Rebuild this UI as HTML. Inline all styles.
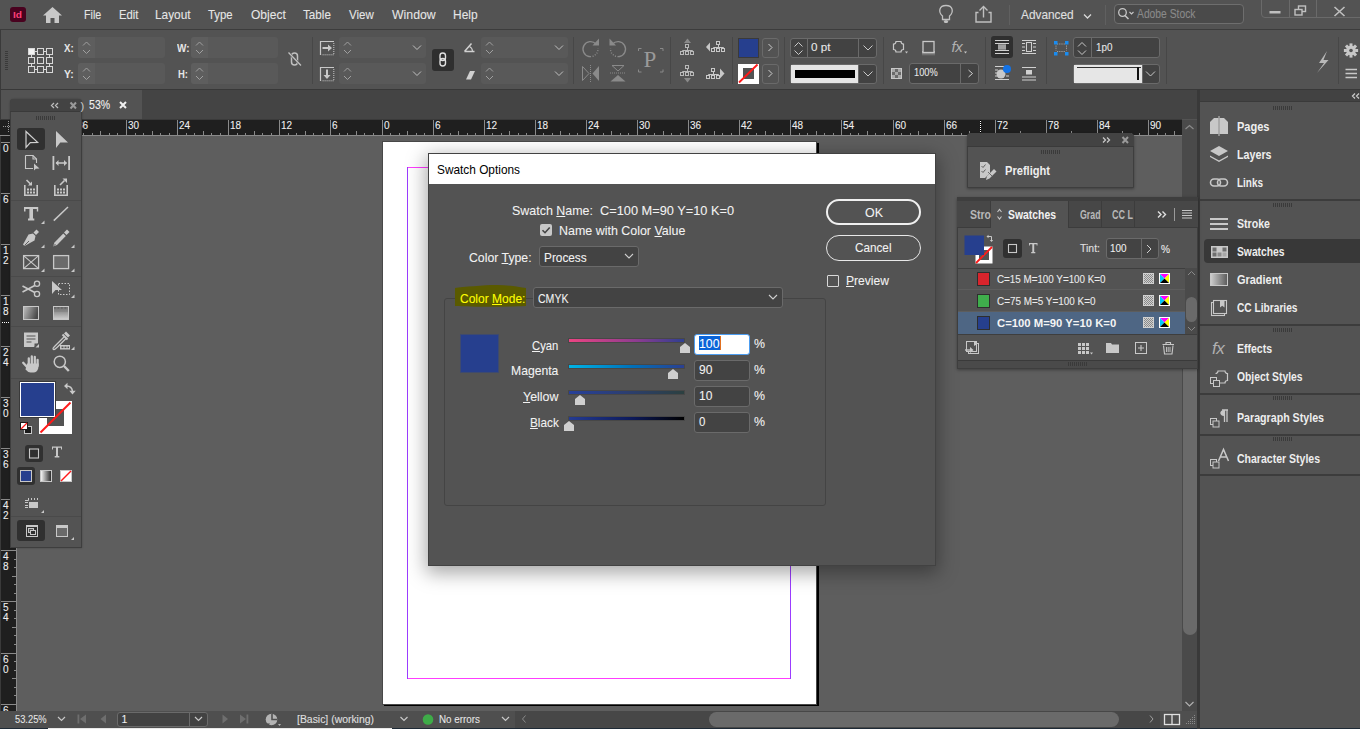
<!DOCTYPE html><html><head><meta charset="utf-8"><style>
html,body{margin:0;padding:0;}
body{width:1360px;height:729px;overflow:hidden;position:relative;background:#535353;font-family:"Liberation Sans",sans-serif;}
div,svg{box-sizing:border-box;}
.tx{-webkit-text-stroke:0.08px currentColor;}
</style></head><body>
<div style="position:absolute;left:0px;top:0px;width:1360px;height:30px;background:#535353;"></div>
<div style="position:absolute;left:0px;top:29px;width:1360px;height:1px;background:#3c3c3c;"></div>
<div style="position:absolute;left:10px;top:7px;width:16px;height:15px;background:#49021f;border-radius:3px;"></div>
<div id="t1" style="position:absolute;left:13px;top:9.96px;font-size:9.5px;line-height:9.5px;color:#ff3f7a;font-weight:bold;white-space:nowrap;font-family:'Liberation Sans', sans-serif;transform:scaleX(1.0647);transform-origin:left top;">Id</div>
<svg style="position:absolute;left:43px;top:7px;" width="19" height="17" viewBox="0 0 19 17"><path d="M9.5 0 L19 8.5 L16 8.5 L16 16 L11.5 16 L11.5 11 L7.5 11 L7.5 16 L3 16 L3 8.5 L0 8.5 Z" fill="#c8c8c8"/></svg>
<div id="t2" class="tx" style="position:absolute;left:83.7px;top:8.00px;font-size:13px;line-height:13px;color:#e6e6e6;font-weight:normal;white-space:nowrap;font-family:'Liberation Sans', sans-serif;transform:scaleX(0.8257);transform-origin:left top;">File</div>
<div id="t3" class="tx" style="position:absolute;left:118.5px;top:8.00px;font-size:13px;line-height:13px;color:#e6e6e6;font-weight:normal;white-space:nowrap;font-family:'Liberation Sans', sans-serif;transform:scaleX(0.8703);transform-origin:left top;">Edit</div>
<div id="t4" class="tx" style="position:absolute;left:155.4px;top:8.00px;font-size:13px;line-height:13px;color:#e6e6e6;font-weight:normal;white-space:nowrap;font-family:'Liberation Sans', sans-serif;transform:scaleX(0.9117);transform-origin:left top;">Layout</div>
<div id="t5" class="tx" style="position:absolute;left:208.3px;top:8.00px;font-size:13px;line-height:13px;color:#e6e6e6;font-weight:normal;white-space:nowrap;font-family:'Liberation Sans', sans-serif;transform:scaleX(0.8763);transform-origin:left top;">Type</div>
<div id="t6" class="tx" style="position:absolute;left:251.2px;top:8.00px;font-size:13px;line-height:13px;color:#e6e6e6;font-weight:normal;white-space:nowrap;font-family:'Liberation Sans', sans-serif;transform:scaleX(0.9261);transform-origin:left top;">Object</div>
<div id="t7" class="tx" style="position:absolute;left:303.3px;top:8.00px;font-size:13px;line-height:13px;color:#e6e6e6;font-weight:normal;white-space:nowrap;font-family:'Liberation Sans', sans-serif;transform:scaleX(0.8977);transform-origin:left top;">Table</div>
<div id="t8" class="tx" style="position:absolute;left:349px;top:8.00px;font-size:13px;line-height:13px;color:#e6e6e6;font-weight:normal;white-space:nowrap;font-family:'Liberation Sans', sans-serif;transform:scaleX(0.8872);transform-origin:left top;">View</div>
<div id="t9" class="tx" style="position:absolute;left:392.2px;top:8.00px;font-size:13px;line-height:13px;color:#e6e6e6;font-weight:normal;white-space:nowrap;font-family:'Liberation Sans', sans-serif;transform:scaleX(0.9449);transform-origin:left top;">Window</div>
<div id="t10" class="tx" style="position:absolute;left:453.4px;top:8.00px;font-size:13px;line-height:13px;color:#e6e6e6;font-weight:normal;white-space:nowrap;font-family:'Liberation Sans', sans-serif;transform:scaleX(0.9196);transform-origin:left top;">Help</div>
<div style="position:absolute;left:0px;top:30px;width:1360px;height:60px;background:#535353;"></div>
<div style="position:absolute;left:0px;top:89px;width:1360px;height:1px;background:#383838;"></div>
<div style="position:absolute;left:0px;top:30px;width:1px;height:60px;background:#3a3a3a;"></div>
<div style="position:absolute;left:0px;top:90px;width:1200px;height:29px;background:#444444;"></div>
<div style="position:absolute;left:1px;top:90px;width:141px;height:29px;background:#535353;"></div>
<div style="position:absolute;left:17px;top:136px;width:1165px;height:575px;background:#5e5e5e;"></div>
<div style="position:absolute;left:0px;top:119px;width:1182px;height:1px;background:#3a3a3a;"></div>
<div style="position:absolute;left:0px;top:120px;width:1182px;height:16px;background:#1f1f1f;"></div>
<div style="position:absolute;left:0px;top:120px;width:16px;height:591px;background:#1f1f1f;"></div>
<div style="position:absolute;left:16px;top:135px;width:1166px;height:1px;background:#8a8a8a;"></div>
<div style="position:absolute;left:16px;top:136px;width:1px;height:575px;background:#8a8a8a;"></div>
<div style="position:absolute;left:0px;top:90px;width:1px;height:621px;background:#3a3a3a;"></div>
<svg style="position:absolute;left:16px;top:120px;" width="1166" height="15" viewBox="0 0 1166 15"><line x1="8.5" y1="0" x2="8.5" y2="15" stroke="#8a8a8a" stroke-width="1"/><line x1="16.5" y1="13" x2="16.5" y2="15" stroke="#8a8a8a" stroke-width="1"/><line x1="25.5" y1="13" x2="25.5" y2="15" stroke="#8a8a8a" stroke-width="1"/><line x1="33.5" y1="11" x2="33.5" y2="15" stroke="#8a8a8a" stroke-width="1"/><line x1="42.5" y1="13" x2="42.5" y2="15" stroke="#8a8a8a" stroke-width="1"/><line x1="50.5" y1="13" x2="50.5" y2="15" stroke="#8a8a8a" stroke-width="1"/><line x1="59.5" y1="0" x2="59.5" y2="15" stroke="#8a8a8a" stroke-width="1"/><line x1="67.5" y1="13" x2="67.5" y2="15" stroke="#8a8a8a" stroke-width="1"/><line x1="76.5" y1="13" x2="76.5" y2="15" stroke="#8a8a8a" stroke-width="1"/><line x1="84.5" y1="11" x2="84.5" y2="15" stroke="#8a8a8a" stroke-width="1"/><line x1="93.5" y1="13" x2="93.5" y2="15" stroke="#8a8a8a" stroke-width="1"/><line x1="101.5" y1="13" x2="101.5" y2="15" stroke="#8a8a8a" stroke-width="1"/><line x1="110.5" y1="0" x2="110.5" y2="15" stroke="#8a8a8a" stroke-width="1"/><line x1="119.5" y1="13" x2="119.5" y2="15" stroke="#8a8a8a" stroke-width="1"/><line x1="127.5" y1="13" x2="127.5" y2="15" stroke="#8a8a8a" stroke-width="1"/><line x1="136.5" y1="11" x2="136.5" y2="15" stroke="#8a8a8a" stroke-width="1"/><line x1="144.5" y1="13" x2="144.5" y2="15" stroke="#8a8a8a" stroke-width="1"/><line x1="153.5" y1="13" x2="153.5" y2="15" stroke="#8a8a8a" stroke-width="1"/><line x1="161.5" y1="0" x2="161.5" y2="15" stroke="#8a8a8a" stroke-width="1"/><line x1="170.5" y1="13" x2="170.5" y2="15" stroke="#8a8a8a" stroke-width="1"/><line x1="178.5" y1="13" x2="178.5" y2="15" stroke="#8a8a8a" stroke-width="1"/><line x1="187.5" y1="11" x2="187.5" y2="15" stroke="#8a8a8a" stroke-width="1"/><line x1="195.5" y1="13" x2="195.5" y2="15" stroke="#8a8a8a" stroke-width="1"/><line x1="204.5" y1="13" x2="204.5" y2="15" stroke="#8a8a8a" stroke-width="1"/><line x1="212.5" y1="0" x2="212.5" y2="15" stroke="#8a8a8a" stroke-width="1"/><line x1="221.5" y1="13" x2="221.5" y2="15" stroke="#8a8a8a" stroke-width="1"/><line x1="229.5" y1="13" x2="229.5" y2="15" stroke="#8a8a8a" stroke-width="1"/><line x1="238.5" y1="11" x2="238.5" y2="15" stroke="#8a8a8a" stroke-width="1"/><line x1="246.5" y1="13" x2="246.5" y2="15" stroke="#8a8a8a" stroke-width="1"/><line x1="255.5" y1="13" x2="255.5" y2="15" stroke="#8a8a8a" stroke-width="1"/><line x1="263.5" y1="0" x2="263.5" y2="15" stroke="#8a8a8a" stroke-width="1"/><line x1="272.5" y1="13" x2="272.5" y2="15" stroke="#8a8a8a" stroke-width="1"/><line x1="280.5" y1="13" x2="280.5" y2="15" stroke="#8a8a8a" stroke-width="1"/><line x1="289.5" y1="11" x2="289.5" y2="15" stroke="#8a8a8a" stroke-width="1"/><line x1="297.5" y1="13" x2="297.5" y2="15" stroke="#8a8a8a" stroke-width="1"/><line x1="306.5" y1="13" x2="306.5" y2="15" stroke="#8a8a8a" stroke-width="1"/><line x1="314.5" y1="0" x2="314.5" y2="15" stroke="#8a8a8a" stroke-width="1"/><line x1="323.5" y1="13" x2="323.5" y2="15" stroke="#8a8a8a" stroke-width="1"/><line x1="331.5" y1="13" x2="331.5" y2="15" stroke="#8a8a8a" stroke-width="1"/><line x1="340.5" y1="11" x2="340.5" y2="15" stroke="#8a8a8a" stroke-width="1"/><line x1="348.5" y1="13" x2="348.5" y2="15" stroke="#8a8a8a" stroke-width="1"/><line x1="357.5" y1="13" x2="357.5" y2="15" stroke="#8a8a8a" stroke-width="1"/><line x1="366.5" y1="0" x2="366.5" y2="15" stroke="#8a8a8a" stroke-width="1"/><line x1="374.5" y1="13" x2="374.5" y2="15" stroke="#8a8a8a" stroke-width="1"/><line x1="383.5" y1="13" x2="383.5" y2="15" stroke="#8a8a8a" stroke-width="1"/><line x1="391.5" y1="11" x2="391.5" y2="15" stroke="#8a8a8a" stroke-width="1"/><line x1="400.5" y1="13" x2="400.5" y2="15" stroke="#8a8a8a" stroke-width="1"/><line x1="408.5" y1="13" x2="408.5" y2="15" stroke="#8a8a8a" stroke-width="1"/><line x1="417.5" y1="0" x2="417.5" y2="15" stroke="#8a8a8a" stroke-width="1"/><line x1="425.5" y1="13" x2="425.5" y2="15" stroke="#8a8a8a" stroke-width="1"/><line x1="434.5" y1="13" x2="434.5" y2="15" stroke="#8a8a8a" stroke-width="1"/><line x1="442.5" y1="11" x2="442.5" y2="15" stroke="#8a8a8a" stroke-width="1"/><line x1="451.5" y1="13" x2="451.5" y2="15" stroke="#8a8a8a" stroke-width="1"/><line x1="459.5" y1="13" x2="459.5" y2="15" stroke="#8a8a8a" stroke-width="1"/><line x1="468.5" y1="0" x2="468.5" y2="15" stroke="#8a8a8a" stroke-width="1"/><line x1="476.5" y1="13" x2="476.5" y2="15" stroke="#8a8a8a" stroke-width="1"/><line x1="485.5" y1="13" x2="485.5" y2="15" stroke="#8a8a8a" stroke-width="1"/><line x1="493.5" y1="11" x2="493.5" y2="15" stroke="#8a8a8a" stroke-width="1"/><line x1="502.5" y1="13" x2="502.5" y2="15" stroke="#8a8a8a" stroke-width="1"/><line x1="510.5" y1="13" x2="510.5" y2="15" stroke="#8a8a8a" stroke-width="1"/><line x1="519.5" y1="0" x2="519.5" y2="15" stroke="#8a8a8a" stroke-width="1"/><line x1="527.5" y1="13" x2="527.5" y2="15" stroke="#8a8a8a" stroke-width="1"/><line x1="536.5" y1="13" x2="536.5" y2="15" stroke="#8a8a8a" stroke-width="1"/><line x1="544.5" y1="11" x2="544.5" y2="15" stroke="#8a8a8a" stroke-width="1"/><line x1="553.5" y1="13" x2="553.5" y2="15" stroke="#8a8a8a" stroke-width="1"/><line x1="561.5" y1="13" x2="561.5" y2="15" stroke="#8a8a8a" stroke-width="1"/><line x1="570.5" y1="0" x2="570.5" y2="15" stroke="#8a8a8a" stroke-width="1"/><line x1="578.5" y1="13" x2="578.5" y2="15" stroke="#8a8a8a" stroke-width="1"/><line x1="587.5" y1="13" x2="587.5" y2="15" stroke="#8a8a8a" stroke-width="1"/><line x1="595.5" y1="11" x2="595.5" y2="15" stroke="#8a8a8a" stroke-width="1"/><line x1="604.5" y1="13" x2="604.5" y2="15" stroke="#8a8a8a" stroke-width="1"/><line x1="612.5" y1="13" x2="612.5" y2="15" stroke="#8a8a8a" stroke-width="1"/><line x1="621.5" y1="0" x2="621.5" y2="15" stroke="#8a8a8a" stroke-width="1"/><line x1="630.5" y1="13" x2="630.5" y2="15" stroke="#8a8a8a" stroke-width="1"/><line x1="638.5" y1="13" x2="638.5" y2="15" stroke="#8a8a8a" stroke-width="1"/><line x1="647.5" y1="11" x2="647.5" y2="15" stroke="#8a8a8a" stroke-width="1"/><line x1="655.5" y1="13" x2="655.5" y2="15" stroke="#8a8a8a" stroke-width="1"/><line x1="664.5" y1="13" x2="664.5" y2="15" stroke="#8a8a8a" stroke-width="1"/><line x1="672.5" y1="0" x2="672.5" y2="15" stroke="#8a8a8a" stroke-width="1"/><line x1="681.5" y1="13" x2="681.5" y2="15" stroke="#8a8a8a" stroke-width="1"/><line x1="689.5" y1="13" x2="689.5" y2="15" stroke="#8a8a8a" stroke-width="1"/><line x1="698.5" y1="11" x2="698.5" y2="15" stroke="#8a8a8a" stroke-width="1"/><line x1="706.5" y1="13" x2="706.5" y2="15" stroke="#8a8a8a" stroke-width="1"/><line x1="715.5" y1="13" x2="715.5" y2="15" stroke="#8a8a8a" stroke-width="1"/><line x1="723.5" y1="0" x2="723.5" y2="15" stroke="#8a8a8a" stroke-width="1"/><line x1="732.5" y1="13" x2="732.5" y2="15" stroke="#8a8a8a" stroke-width="1"/><line x1="740.5" y1="13" x2="740.5" y2="15" stroke="#8a8a8a" stroke-width="1"/><line x1="749.5" y1="11" x2="749.5" y2="15" stroke="#8a8a8a" stroke-width="1"/><line x1="757.5" y1="13" x2="757.5" y2="15" stroke="#8a8a8a" stroke-width="1"/><line x1="766.5" y1="13" x2="766.5" y2="15" stroke="#8a8a8a" stroke-width="1"/><line x1="774.5" y1="0" x2="774.5" y2="15" stroke="#8a8a8a" stroke-width="1"/><line x1="783.5" y1="13" x2="783.5" y2="15" stroke="#8a8a8a" stroke-width="1"/><line x1="791.5" y1="13" x2="791.5" y2="15" stroke="#8a8a8a" stroke-width="1"/><line x1="800.5" y1="11" x2="800.5" y2="15" stroke="#8a8a8a" stroke-width="1"/><line x1="808.5" y1="13" x2="808.5" y2="15" stroke="#8a8a8a" stroke-width="1"/><line x1="817.5" y1="13" x2="817.5" y2="15" stroke="#8a8a8a" stroke-width="1"/><line x1="825.5" y1="0" x2="825.5" y2="15" stroke="#8a8a8a" stroke-width="1"/><line x1="834.5" y1="13" x2="834.5" y2="15" stroke="#8a8a8a" stroke-width="1"/><line x1="842.5" y1="13" x2="842.5" y2="15" stroke="#8a8a8a" stroke-width="1"/><line x1="851.5" y1="11" x2="851.5" y2="15" stroke="#8a8a8a" stroke-width="1"/><line x1="859.5" y1="13" x2="859.5" y2="15" stroke="#8a8a8a" stroke-width="1"/><line x1="868.5" y1="13" x2="868.5" y2="15" stroke="#8a8a8a" stroke-width="1"/><line x1="877.5" y1="0" x2="877.5" y2="15" stroke="#8a8a8a" stroke-width="1"/><line x1="885.5" y1="13" x2="885.5" y2="15" stroke="#8a8a8a" stroke-width="1"/><line x1="894.5" y1="13" x2="894.5" y2="15" stroke="#8a8a8a" stroke-width="1"/><line x1="902.5" y1="11" x2="902.5" y2="15" stroke="#8a8a8a" stroke-width="1"/><line x1="911.5" y1="13" x2="911.5" y2="15" stroke="#8a8a8a" stroke-width="1"/><line x1="919.5" y1="13" x2="919.5" y2="15" stroke="#8a8a8a" stroke-width="1"/><line x1="928.5" y1="0" x2="928.5" y2="15" stroke="#8a8a8a" stroke-width="1"/><line x1="936.5" y1="13" x2="936.5" y2="15" stroke="#8a8a8a" stroke-width="1"/><line x1="945.5" y1="13" x2="945.5" y2="15" stroke="#8a8a8a" stroke-width="1"/><line x1="953.5" y1="11" x2="953.5" y2="15" stroke="#8a8a8a" stroke-width="1"/><line x1="962.5" y1="13" x2="962.5" y2="15" stroke="#8a8a8a" stroke-width="1"/><line x1="970.5" y1="13" x2="970.5" y2="15" stroke="#8a8a8a" stroke-width="1"/><line x1="979.5" y1="0" x2="979.5" y2="15" stroke="#8a8a8a" stroke-width="1"/><line x1="987.5" y1="13" x2="987.5" y2="15" stroke="#8a8a8a" stroke-width="1"/><line x1="996.5" y1="13" x2="996.5" y2="15" stroke="#8a8a8a" stroke-width="1"/><line x1="1004.5" y1="11" x2="1004.5" y2="15" stroke="#8a8a8a" stroke-width="1"/><line x1="1013.5" y1="13" x2="1013.5" y2="15" stroke="#8a8a8a" stroke-width="1"/><line x1="1021.5" y1="13" x2="1021.5" y2="15" stroke="#8a8a8a" stroke-width="1"/><line x1="1030.5" y1="0" x2="1030.5" y2="15" stroke="#8a8a8a" stroke-width="1"/><line x1="1038.5" y1="13" x2="1038.5" y2="15" stroke="#8a8a8a" stroke-width="1"/><line x1="1047.5" y1="13" x2="1047.5" y2="15" stroke="#8a8a8a" stroke-width="1"/><line x1="1055.5" y1="11" x2="1055.5" y2="15" stroke="#8a8a8a" stroke-width="1"/><line x1="1064.5" y1="13" x2="1064.5" y2="15" stroke="#8a8a8a" stroke-width="1"/><line x1="1072.5" y1="13" x2="1072.5" y2="15" stroke="#8a8a8a" stroke-width="1"/><line x1="1081.5" y1="0" x2="1081.5" y2="15" stroke="#8a8a8a" stroke-width="1"/><line x1="1089.5" y1="13" x2="1089.5" y2="15" stroke="#8a8a8a" stroke-width="1"/><line x1="1098.5" y1="13" x2="1098.5" y2="15" stroke="#8a8a8a" stroke-width="1"/><line x1="1106.5" y1="11" x2="1106.5" y2="15" stroke="#8a8a8a" stroke-width="1"/><line x1="1115.5" y1="13" x2="1115.5" y2="15" stroke="#8a8a8a" stroke-width="1"/><line x1="1123.5" y1="13" x2="1123.5" y2="15" stroke="#8a8a8a" stroke-width="1"/><line x1="1132.5" y1="0" x2="1132.5" y2="15" stroke="#8a8a8a" stroke-width="1"/><line x1="1141.5" y1="13" x2="1141.5" y2="15" stroke="#8a8a8a" stroke-width="1"/><line x1="1149.5" y1="13" x2="1149.5" y2="15" stroke="#8a8a8a" stroke-width="1"/><line x1="1158.5" y1="11" x2="1158.5" y2="15" stroke="#8a8a8a" stroke-width="1"/><line x1="1166.5" y1="13" x2="1166.5" y2="15" stroke="#8a8a8a" stroke-width="1"/></svg>
<div id="t11" class="tx" style="position:absolute;left:26px;top:120.53px;font-size:10px;line-height:10px;color:#f0f0f0;font-weight:normal;white-space:nowrap;font-family:'Liberation Sans', sans-serif;transform:scaleX(1.0000);transform-origin:left top;">42</div>
<div id="t12" class="tx" style="position:absolute;left:77px;top:120.53px;font-size:10px;line-height:10px;color:#f0f0f0;font-weight:normal;white-space:nowrap;font-family:'Liberation Sans', sans-serif;transform:scaleX(1.0000);transform-origin:left top;">36</div>
<div id="t13" class="tx" style="position:absolute;left:128px;top:120.53px;font-size:10px;line-height:10px;color:#f0f0f0;font-weight:normal;white-space:nowrap;font-family:'Liberation Sans', sans-serif;transform:scaleX(1.0000);transform-origin:left top;">30</div>
<div id="t14" class="tx" style="position:absolute;left:179px;top:120.53px;font-size:10px;line-height:10px;color:#f0f0f0;font-weight:normal;white-space:nowrap;font-family:'Liberation Sans', sans-serif;transform:scaleX(1.0000);transform-origin:left top;">24</div>
<div id="t15" class="tx" style="position:absolute;left:230px;top:120.53px;font-size:10px;line-height:10px;color:#f0f0f0;font-weight:normal;white-space:nowrap;font-family:'Liberation Sans', sans-serif;transform:scaleX(1.0000);transform-origin:left top;">18</div>
<div id="t16" class="tx" style="position:absolute;left:281px;top:120.53px;font-size:10px;line-height:10px;color:#f0f0f0;font-weight:normal;white-space:nowrap;font-family:'Liberation Sans', sans-serif;transform:scaleX(1.0000);transform-origin:left top;">12</div>
<div id="t17" class="tx" style="position:absolute;left:332px;top:120.53px;font-size:10px;line-height:10px;color:#f0f0f0;font-weight:normal;white-space:nowrap;font-family:'Liberation Sans', sans-serif;transform:scaleX(1.0000);transform-origin:left top;">6</div>
<div id="t18" class="tx" style="position:absolute;left:384px;top:120.53px;font-size:10px;line-height:10px;color:#f0f0f0;font-weight:normal;white-space:nowrap;font-family:'Liberation Sans', sans-serif;transform:scaleX(1.0000);transform-origin:left top;">0</div>
<div id="t19" class="tx" style="position:absolute;left:435px;top:120.53px;font-size:10px;line-height:10px;color:#f0f0f0;font-weight:normal;white-space:nowrap;font-family:'Liberation Sans', sans-serif;transform:scaleX(1.0000);transform-origin:left top;">6</div>
<div id="t20" class="tx" style="position:absolute;left:486px;top:120.53px;font-size:10px;line-height:10px;color:#f0f0f0;font-weight:normal;white-space:nowrap;font-family:'Liberation Sans', sans-serif;transform:scaleX(1.0000);transform-origin:left top;">12</div>
<div id="t21" class="tx" style="position:absolute;left:537px;top:120.53px;font-size:10px;line-height:10px;color:#f0f0f0;font-weight:normal;white-space:nowrap;font-family:'Liberation Sans', sans-serif;transform:scaleX(1.0000);transform-origin:left top;">18</div>
<div id="t22" class="tx" style="position:absolute;left:588px;top:120.53px;font-size:10px;line-height:10px;color:#f0f0f0;font-weight:normal;white-space:nowrap;font-family:'Liberation Sans', sans-serif;transform:scaleX(1.0000);transform-origin:left top;">24</div>
<div id="t23" class="tx" style="position:absolute;left:639px;top:120.53px;font-size:10px;line-height:10px;color:#f0f0f0;font-weight:normal;white-space:nowrap;font-family:'Liberation Sans', sans-serif;transform:scaleX(1.0000);transform-origin:left top;">30</div>
<div id="t24" class="tx" style="position:absolute;left:690px;top:120.53px;font-size:10px;line-height:10px;color:#f0f0f0;font-weight:normal;white-space:nowrap;font-family:'Liberation Sans', sans-serif;transform:scaleX(1.0000);transform-origin:left top;">36</div>
<div id="t25" class="tx" style="position:absolute;left:741px;top:120.53px;font-size:10px;line-height:10px;color:#f0f0f0;font-weight:normal;white-space:nowrap;font-family:'Liberation Sans', sans-serif;transform:scaleX(1.0000);transform-origin:left top;">42</div>
<div id="t26" class="tx" style="position:absolute;left:792px;top:120.53px;font-size:10px;line-height:10px;color:#f0f0f0;font-weight:normal;white-space:nowrap;font-family:'Liberation Sans', sans-serif;transform:scaleX(1.0000);transform-origin:left top;">48</div>
<div id="t27" class="tx" style="position:absolute;left:843px;top:120.53px;font-size:10px;line-height:10px;color:#f0f0f0;font-weight:normal;white-space:nowrap;font-family:'Liberation Sans', sans-serif;transform:scaleX(1.0000);transform-origin:left top;">54</div>
<div id="t28" class="tx" style="position:absolute;left:895px;top:120.53px;font-size:10px;line-height:10px;color:#f0f0f0;font-weight:normal;white-space:nowrap;font-family:'Liberation Sans', sans-serif;transform:scaleX(1.0000);transform-origin:left top;">60</div>
<div id="t29" class="tx" style="position:absolute;left:946px;top:120.53px;font-size:10px;line-height:10px;color:#f0f0f0;font-weight:normal;white-space:nowrap;font-family:'Liberation Sans', sans-serif;transform:scaleX(1.0000);transform-origin:left top;">66</div>
<div id="t30" class="tx" style="position:absolute;left:997px;top:120.53px;font-size:10px;line-height:10px;color:#f0f0f0;font-weight:normal;white-space:nowrap;font-family:'Liberation Sans', sans-serif;transform:scaleX(1.0000);transform-origin:left top;">72</div>
<div id="t31" class="tx" style="position:absolute;left:1048px;top:120.53px;font-size:10px;line-height:10px;color:#f0f0f0;font-weight:normal;white-space:nowrap;font-family:'Liberation Sans', sans-serif;transform:scaleX(1.0000);transform-origin:left top;">78</div>
<div id="t32" class="tx" style="position:absolute;left:1099px;top:120.53px;font-size:10px;line-height:10px;color:#f0f0f0;font-weight:normal;white-space:nowrap;font-family:'Liberation Sans', sans-serif;transform:scaleX(1.0000);transform-origin:left top;">84</div>
<div id="t33" class="tx" style="position:absolute;left:1150px;top:120.53px;font-size:10px;line-height:10px;color:#f0f0f0;font-weight:normal;white-space:nowrap;font-family:'Liberation Sans', sans-serif;transform:scaleX(1.0000);transform-origin:left top;">90</div>
<svg style="position:absolute;left:0px;top:136px;" width="17" height="575" viewBox="0 0 17 575"><line x1="1" y1="6.5" x2="16" y2="6.5" stroke="#8a8a8a" stroke-width="1"/><line x1="14" y1="14.5" x2="16" y2="14.5" stroke="#8a8a8a" stroke-width="1"/><line x1="14" y1="23.5" x2="16" y2="23.5" stroke="#8a8a8a" stroke-width="1"/><line x1="12" y1="31.5" x2="16" y2="31.5" stroke="#8a8a8a" stroke-width="1"/><line x1="14" y1="40.5" x2="16" y2="40.5" stroke="#8a8a8a" stroke-width="1"/><line x1="14" y1="48.5" x2="16" y2="48.5" stroke="#8a8a8a" stroke-width="1"/><line x1="1" y1="57.5" x2="16" y2="57.5" stroke="#8a8a8a" stroke-width="1"/><line x1="14" y1="65.5" x2="16" y2="65.5" stroke="#8a8a8a" stroke-width="1"/><line x1="14" y1="74.5" x2="16" y2="74.5" stroke="#8a8a8a" stroke-width="1"/><line x1="12" y1="82.5" x2="16" y2="82.5" stroke="#8a8a8a" stroke-width="1"/><line x1="14" y1="91.5" x2="16" y2="91.5" stroke="#8a8a8a" stroke-width="1"/><line x1="14" y1="99.5" x2="16" y2="99.5" stroke="#8a8a8a" stroke-width="1"/><line x1="1" y1="108.5" x2="16" y2="108.5" stroke="#8a8a8a" stroke-width="1"/><line x1="14" y1="116.5" x2="16" y2="116.5" stroke="#8a8a8a" stroke-width="1"/><line x1="14" y1="125.5" x2="16" y2="125.5" stroke="#8a8a8a" stroke-width="1"/><line x1="12" y1="133.5" x2="16" y2="133.5" stroke="#8a8a8a" stroke-width="1"/><line x1="14" y1="142.5" x2="16" y2="142.5" stroke="#8a8a8a" stroke-width="1"/><line x1="14" y1="150.5" x2="16" y2="150.5" stroke="#8a8a8a" stroke-width="1"/><line x1="1" y1="159.5" x2="16" y2="159.5" stroke="#8a8a8a" stroke-width="1"/><line x1="14" y1="167.5" x2="16" y2="167.5" stroke="#8a8a8a" stroke-width="1"/><line x1="14" y1="176.5" x2="16" y2="176.5" stroke="#8a8a8a" stroke-width="1"/><line x1="12" y1="184.5" x2="16" y2="184.5" stroke="#8a8a8a" stroke-width="1"/><line x1="14" y1="193.5" x2="16" y2="193.5" stroke="#8a8a8a" stroke-width="1"/><line x1="14" y1="201.5" x2="16" y2="201.5" stroke="#8a8a8a" stroke-width="1"/><line x1="1" y1="210.5" x2="16" y2="210.5" stroke="#8a8a8a" stroke-width="1"/><line x1="14" y1="218.5" x2="16" y2="218.5" stroke="#8a8a8a" stroke-width="1"/><line x1="14" y1="227.5" x2="16" y2="227.5" stroke="#8a8a8a" stroke-width="1"/><line x1="12" y1="235.5" x2="16" y2="235.5" stroke="#8a8a8a" stroke-width="1"/><line x1="14" y1="244.5" x2="16" y2="244.5" stroke="#8a8a8a" stroke-width="1"/><line x1="14" y1="252.5" x2="16" y2="252.5" stroke="#8a8a8a" stroke-width="1"/><line x1="1" y1="261.5" x2="16" y2="261.5" stroke="#8a8a8a" stroke-width="1"/><line x1="14" y1="270.5" x2="16" y2="270.5" stroke="#8a8a8a" stroke-width="1"/><line x1="14" y1="278.5" x2="16" y2="278.5" stroke="#8a8a8a" stroke-width="1"/><line x1="12" y1="287.5" x2="16" y2="287.5" stroke="#8a8a8a" stroke-width="1"/><line x1="14" y1="295.5" x2="16" y2="295.5" stroke="#8a8a8a" stroke-width="1"/><line x1="14" y1="304.5" x2="16" y2="304.5" stroke="#8a8a8a" stroke-width="1"/><line x1="1" y1="312.5" x2="16" y2="312.5" stroke="#8a8a8a" stroke-width="1"/><line x1="14" y1="321.5" x2="16" y2="321.5" stroke="#8a8a8a" stroke-width="1"/><line x1="14" y1="329.5" x2="16" y2="329.5" stroke="#8a8a8a" stroke-width="1"/><line x1="12" y1="338.5" x2="16" y2="338.5" stroke="#8a8a8a" stroke-width="1"/><line x1="14" y1="346.5" x2="16" y2="346.5" stroke="#8a8a8a" stroke-width="1"/><line x1="14" y1="355.5" x2="16" y2="355.5" stroke="#8a8a8a" stroke-width="1"/><line x1="1" y1="363.5" x2="16" y2="363.5" stroke="#8a8a8a" stroke-width="1"/><line x1="14" y1="372.5" x2="16" y2="372.5" stroke="#8a8a8a" stroke-width="1"/><line x1="14" y1="380.5" x2="16" y2="380.5" stroke="#8a8a8a" stroke-width="1"/><line x1="12" y1="389.5" x2="16" y2="389.5" stroke="#8a8a8a" stroke-width="1"/><line x1="14" y1="397.5" x2="16" y2="397.5" stroke="#8a8a8a" stroke-width="1"/><line x1="14" y1="406.5" x2="16" y2="406.5" stroke="#8a8a8a" stroke-width="1"/><line x1="1" y1="414.5" x2="16" y2="414.5" stroke="#8a8a8a" stroke-width="1"/><line x1="14" y1="423.5" x2="16" y2="423.5" stroke="#8a8a8a" stroke-width="1"/><line x1="14" y1="431.5" x2="16" y2="431.5" stroke="#8a8a8a" stroke-width="1"/><line x1="12" y1="440.5" x2="16" y2="440.5" stroke="#8a8a8a" stroke-width="1"/><line x1="14" y1="448.5" x2="16" y2="448.5" stroke="#8a8a8a" stroke-width="1"/><line x1="14" y1="457.5" x2="16" y2="457.5" stroke="#8a8a8a" stroke-width="1"/><line x1="1" y1="465.5" x2="16" y2="465.5" stroke="#8a8a8a" stroke-width="1"/><line x1="14" y1="474.5" x2="16" y2="474.5" stroke="#8a8a8a" stroke-width="1"/><line x1="14" y1="482.5" x2="16" y2="482.5" stroke="#8a8a8a" stroke-width="1"/><line x1="12" y1="491.5" x2="16" y2="491.5" stroke="#8a8a8a" stroke-width="1"/><line x1="14" y1="499.5" x2="16" y2="499.5" stroke="#8a8a8a" stroke-width="1"/><line x1="14" y1="508.5" x2="16" y2="508.5" stroke="#8a8a8a" stroke-width="1"/><line x1="1" y1="517.5" x2="16" y2="517.5" stroke="#8a8a8a" stroke-width="1"/><line x1="14" y1="525.5" x2="16" y2="525.5" stroke="#8a8a8a" stroke-width="1"/><line x1="14" y1="534.5" x2="16" y2="534.5" stroke="#8a8a8a" stroke-width="1"/><line x1="12" y1="542.5" x2="16" y2="542.5" stroke="#8a8a8a" stroke-width="1"/><line x1="14" y1="551.5" x2="16" y2="551.5" stroke="#8a8a8a" stroke-width="1"/><line x1="14" y1="559.5" x2="16" y2="559.5" stroke="#8a8a8a" stroke-width="1"/><line x1="1" y1="568.5" x2="16" y2="568.5" stroke="#8a8a8a" stroke-width="1"/></svg>
<div id="t34" class="tx" style="position:absolute;left:3px;top:144.03px;font-size:10px;line-height:10px;color:#f0f0f0;font-weight:normal;white-space:nowrap;font-family:'Liberation Sans', sans-serif;transform:scaleX(1.0000);transform-origin:left top;">0</div>
<div id="t35" class="tx" style="position:absolute;left:3px;top:195.03px;font-size:10px;line-height:10px;color:#f0f0f0;font-weight:normal;white-space:nowrap;font-family:'Liberation Sans', sans-serif;transform:scaleX(1.0000);transform-origin:left top;">6</div>
<div id="t36" class="tx" style="position:absolute;left:3px;top:246.03px;font-size:10px;line-height:10px;color:#f0f0f0;font-weight:normal;white-space:nowrap;font-family:'Liberation Sans', sans-serif;transform:scaleX(1.0000);transform-origin:left top;">1</div>
<div id="t37" class="tx" style="position:absolute;left:3px;top:255.64px;font-size:10px;line-height:10px;color:#f0f0f0;font-weight:normal;white-space:nowrap;font-family:'Liberation Sans', sans-serif;transform:scaleX(1.0000);transform-origin:left top;">2</div>
<div id="t38" class="tx" style="position:absolute;left:3px;top:297.04px;font-size:10px;line-height:10px;color:#f0f0f0;font-weight:normal;white-space:nowrap;font-family:'Liberation Sans', sans-serif;transform:scaleX(1.0000);transform-origin:left top;">1</div>
<div id="t39" class="tx" style="position:absolute;left:3px;top:306.64px;font-size:10px;line-height:10px;color:#f0f0f0;font-weight:normal;white-space:nowrap;font-family:'Liberation Sans', sans-serif;transform:scaleX(1.0000);transform-origin:left top;">8</div>
<div id="t40" class="tx" style="position:absolute;left:3px;top:348.04px;font-size:10px;line-height:10px;color:#f0f0f0;font-weight:normal;white-space:nowrap;font-family:'Liberation Sans', sans-serif;transform:scaleX(1.0000);transform-origin:left top;">2</div>
<div id="t41" class="tx" style="position:absolute;left:3px;top:357.64px;font-size:10px;line-height:10px;color:#f0f0f0;font-weight:normal;white-space:nowrap;font-family:'Liberation Sans', sans-serif;transform:scaleX(1.0000);transform-origin:left top;">4</div>
<div id="t42" class="tx" style="position:absolute;left:3px;top:399.04px;font-size:10px;line-height:10px;color:#f0f0f0;font-weight:normal;white-space:nowrap;font-family:'Liberation Sans', sans-serif;transform:scaleX(1.0000);transform-origin:left top;">3</div>
<div id="t43" class="tx" style="position:absolute;left:3px;top:408.64px;font-size:10px;line-height:10px;color:#f0f0f0;font-weight:normal;white-space:nowrap;font-family:'Liberation Sans', sans-serif;transform:scaleX(1.0000);transform-origin:left top;">0</div>
<div id="t44" class="tx" style="position:absolute;left:3px;top:450.04px;font-size:10px;line-height:10px;color:#f0f0f0;font-weight:normal;white-space:nowrap;font-family:'Liberation Sans', sans-serif;transform:scaleX(1.0000);transform-origin:left top;">3</div>
<div id="t45" class="tx" style="position:absolute;left:3px;top:459.64px;font-size:10px;line-height:10px;color:#f0f0f0;font-weight:normal;white-space:nowrap;font-family:'Liberation Sans', sans-serif;transform:scaleX(1.0000);transform-origin:left top;">6</div>
<div id="t46" class="tx" style="position:absolute;left:3px;top:501.04px;font-size:10px;line-height:10px;color:#f0f0f0;font-weight:normal;white-space:nowrap;font-family:'Liberation Sans', sans-serif;transform:scaleX(1.0000);transform-origin:left top;">4</div>
<div id="t47" class="tx" style="position:absolute;left:3px;top:510.64px;font-size:10px;line-height:10px;color:#f0f0f0;font-weight:normal;white-space:nowrap;font-family:'Liberation Sans', sans-serif;transform:scaleX(1.0000);transform-origin:left top;">2</div>
<div id="t48" class="tx" style="position:absolute;left:3px;top:552.03px;font-size:10px;line-height:10px;color:#f0f0f0;font-weight:normal;white-space:nowrap;font-family:'Liberation Sans', sans-serif;transform:scaleX(1.0000);transform-origin:left top;">4</div>
<div id="t49" class="tx" style="position:absolute;left:3px;top:561.63px;font-size:10px;line-height:10px;color:#f0f0f0;font-weight:normal;white-space:nowrap;font-family:'Liberation Sans', sans-serif;transform:scaleX(1.0000);transform-origin:left top;">8</div>
<div id="t50" class="tx" style="position:absolute;left:3px;top:603.03px;font-size:10px;line-height:10px;color:#f0f0f0;font-weight:normal;white-space:nowrap;font-family:'Liberation Sans', sans-serif;transform:scaleX(1.0000);transform-origin:left top;">5</div>
<div id="t51" class="tx" style="position:absolute;left:3px;top:612.63px;font-size:10px;line-height:10px;color:#f0f0f0;font-weight:normal;white-space:nowrap;font-family:'Liberation Sans', sans-serif;transform:scaleX(1.0000);transform-origin:left top;">4</div>
<div id="t52" class="tx" style="position:absolute;left:3px;top:655.03px;font-size:10px;line-height:10px;color:#f0f0f0;font-weight:normal;white-space:nowrap;font-family:'Liberation Sans', sans-serif;transform:scaleX(1.0000);transform-origin:left top;">6</div>
<div id="t53" class="tx" style="position:absolute;left:3px;top:664.63px;font-size:10px;line-height:10px;color:#f0f0f0;font-weight:normal;white-space:nowrap;font-family:'Liberation Sans', sans-serif;transform:scaleX(1.0000);transform-origin:left top;">0</div>
<div id="t54" class="tx" style="position:absolute;left:3px;top:706.03px;font-size:10px;line-height:10px;color:#f0f0f0;font-weight:normal;white-space:nowrap;font-family:'Liberation Sans', sans-serif;transform:scaleX(1.0000);transform-origin:left top;">6</div>
<div id="t55" class="tx" style="position:absolute;left:3px;top:715.63px;font-size:10px;line-height:10px;color:#f0f0f0;font-weight:normal;white-space:nowrap;font-family:'Liberation Sans', sans-serif;transform:scaleX(1.0000);transform-origin:left top;">6</div>
<div style="position:absolute;left:0px;top:120px;width:16px;height:16px;background:#1f1f1f;"></div>
<svg style="position:absolute;left:3px;top:121px;" width="11" height="12" viewBox="0 0 11 12"><g stroke="#9a9a9a" stroke-width="1" stroke-dasharray="1 1"><line x1="5.5" y1="0" x2="5.5" y2="12"/><line x1="0" y1="5.5" x2="11" y2="5.5"/></g></svg>
<div style="position:absolute;left:0px;top:135px;width:17px;height:1px;background:#8a8a8a;"></div>
<div style="position:absolute;left:384px;top:143px;width:435px;height:563px;background:#000;"></div>
<div style="position:absolute;left:382px;top:141px;width:435px;height:564px;background:#484848;"></div>
<div style="position:absolute;left:383px;top:142px;width:433px;height:562px;background:#fff;"></div>
<div style="position:absolute;left:407px;top:167px;width:384px;height:1px;background:#ff3cff;"></div>
<div style="position:absolute;left:407px;top:678px;width:384px;height:1px;background:#ff3cff;"></div>
<div style="position:absolute;left:407px;top:167px;width:1px;height:512px;background:#9b3cff;"></div>
<div style="position:absolute;left:790px;top:167px;width:1px;height:512px;background:#9b3cff;"></div>
<div style="position:absolute;left:0px;top:711px;width:1200px;height:17px;background:#4f4f4f;"></div>
<div style="position:absolute;left:0px;top:728px;width:1360px;height:1px;background:#1e2a36;"></div>
<div style="position:absolute;left:48px;top:728px;width:344px;height:1px;background:#e8e8e8;"></div>
<svg style="position:absolute;left:980px;top:120px;" width="1" height="13" viewBox="0 0 1 13"><rect x="0" y="1" width="1" height="1" fill="#ffffff"/><rect x="0" y="3" width="1" height="1" fill="#ffffff"/><rect x="0" y="5" width="1" height="1" fill="#ffffff"/><rect x="0" y="7" width="1" height="1" fill="#ffffff"/><rect x="0" y="9" width="1" height="1" fill="#ffffff"/><rect x="0" y="11" width="1" height="1" fill="#ffffff"/><rect x="0" y="0" width="1" height="1" fill="#000"/><rect x="0" y="2" width="1" height="1" fill="#000"/><rect x="0" y="4" width="1" height="1" fill="#000"/><rect x="0" y="6" width="1" height="1" fill="#000"/><rect x="0" y="8" width="1" height="1" fill="#000"/><rect x="0" y="10" width="1" height="1" fill="#000"/><rect x="0" y="12" width="1" height="1" fill="#000"/></svg>
<svg style="position:absolute;left:1px;top:322px;" width="9" height="1" viewBox="0 0 9 1"><rect x="1" y="0" width="1" height="1" fill="#ffffff"/><rect x="3" y="0" width="1" height="1" fill="#ffffff"/><rect x="5" y="0" width="1" height="1" fill="#ffffff"/><rect x="7" y="0" width="1" height="1" fill="#ffffff"/></svg>
<div style="position:absolute;left:428px;top:153px;width:508px;height:413px;background:#535353;border:1px solid #424242;box-shadow:0 5px 18px 2px rgba(0,0,0,0.35);"></div>
<div style="position:absolute;left:429px;top:154px;width:506px;height:30px;background:#ffffff;"></div>
<div id="t56" style="position:absolute;left:437px;top:162.50px;font-size:13px;line-height:13px;color:#000000;font-weight:normal;white-space:nowrap;font-family:'Liberation Sans', sans-serif;transform:scaleX(0.9116);transform-origin:left top;">Swatch Options</div>
<div id="t57" class="tx" style="position:absolute;left:511.8px;top:203.80px;font-size:13px;line-height:13px;color:#f2f2f2;font-weight:normal;white-space:nowrap;font-family:'Liberation Sans', sans-serif;transform:scaleX(0.9580);transform-origin:left top;">Swatch <u>N</u>ame:</div>
<div id="t58" class="tx" style="position:absolute;left:599.7px;top:203.80px;font-size:13px;line-height:13px;color:#f2f2f2;font-weight:normal;white-space:nowrap;font-family:'Liberation Sans', sans-serif;transform:scaleX(0.9826);transform-origin:left top;">C=100 M=90 Y=10 K=0</div>
<div style="position:absolute;left:540px;top:224px;width:12px;height:12px;background:#c8c8c8;border-radius:2px;"></div>
<svg style="position:absolute;left:540px;top:224px;" width="12" height="12" viewBox="0 0 12 12"><path d="M2.5 6.2 L5 8.7 L9.7 3.5" stroke="#444" stroke-width="1.6" fill="none"/></svg>
<div id="t59" class="tx" style="position:absolute;left:559px;top:224.00px;font-size:13px;line-height:13px;color:#f2f2f2;font-weight:normal;white-space:nowrap;font-family:'Liberation Sans', sans-serif;transform:scaleX(0.9576);transform-origin:left top;">Name with Color <u>V</u>alue</div>
<div id="t60" class="tx" style="position:absolute;left:469.4px;top:251.20px;font-size:13px;line-height:13px;color:#f2f2f2;font-weight:normal;white-space:nowrap;font-family:'Liberation Sans', sans-serif;transform:scaleX(0.9447);transform-origin:left top;">Color <u>T</u>ype:</div>
<div style="position:absolute;left:539px;top:246px;width:100px;height:21px;background:#434343;border:1px solid #6a6a6a;border-radius:3px;"></div>
<div id="t61" class="tx" style="position:absolute;left:544px;top:251.00px;font-size:13px;line-height:13px;color:#f2f2f2;font-weight:normal;white-space:nowrap;font-family:'Liberation Sans', sans-serif;transform:scaleX(0.9091);transform-origin:left top;">Process</div>
<svg style="position:absolute;left:624px;top:252px;" width="10" height="8" viewBox="0 0 10 8"><path d="M1 2 L5 6 L9 2" stroke="#d0d0d0" stroke-width="1.1" fill="none"/></svg>
<div style="position:absolute;left:444px;top:298px;width:382px;height:208px;border:1px solid #444444;border-radius:3px;"></div>
<svg style="position:absolute;left:453px;top:284px;" width="76" height="24" viewBox="0 0 76 24"><path d="M2 4 C10 3, 30 1, 44 1 C56 1, 66 3, 73 4 L73 22 C55 23, 20 23, 2 22 Z" fill="#5a5a00"/></svg>
<div id="t62" class="tx" style="position:absolute;left:459.6px;top:291.90px;font-size:13px;line-height:13px;color:#ffff00;font-weight:normal;white-space:nowrap;font-family:'Liberation Sans', sans-serif;transform:scaleX(0.9232);transform-origin:left top;">Color <u>M</u>ode:</div>
<div style="position:absolute;left:533px;top:287px;width:250px;height:21px;background:#434343;border:1px solid #6a6a6a;border-radius:3px;"></div>
<div id="t63" class="tx" style="position:absolute;left:538.2px;top:291.90px;font-size:13px;line-height:13px;color:#f2f2f2;font-weight:normal;white-space:nowrap;font-family:'Liberation Sans', sans-serif;transform:scaleX(0.8120);transform-origin:left top;">CMYK</div>
<svg style="position:absolute;left:768px;top:293px;" width="10" height="8" viewBox="0 0 10 8"><path d="M1 2 L5 6 L9 2" stroke="#d0d0d0" stroke-width="1.1" fill="none"/></svg>
<div style="position:absolute;left:460px;top:334px;width:39px;height:39px;background:#263f8e;border:1px solid #3e4a6e;"></div>
<div id="t64" class="tx" style="position:absolute;left:532.2px;top:338.60px;font-size:13px;line-height:13px;color:#f2f2f2;font-weight:normal;white-space:nowrap;font-family:'Liberation Sans', sans-serif;transform:scaleX(0.8663);transform-origin:left top;"><u>C</u>yan</div>
<div id="t65" class="tx" style="position:absolute;left:511.1px;top:364.20px;font-size:13px;line-height:13px;color:#f2f2f2;font-weight:normal;white-space:nowrap;font-family:'Liberation Sans', sans-serif;transform:scaleX(0.9366);transform-origin:left top;">Ma<u>g</u>enta</div>
<div id="t66" class="tx" style="position:absolute;left:523.1px;top:390.00px;font-size:13px;line-height:13px;color:#f2f2f2;font-weight:normal;white-space:nowrap;font-family:'Liberation Sans', sans-serif;transform:scaleX(0.9539);transform-origin:left top;"><u>Y</u>ellow</div>
<div id="t67" class="tx" style="position:absolute;left:529.7px;top:416.20px;font-size:13px;line-height:13px;color:#f2f2f2;font-weight:normal;white-space:nowrap;font-family:'Liberation Sans', sans-serif;transform:scaleX(0.9057);transform-origin:left top;"><u>B</u>lack</div>
<div style="position:absolute;left:568px;top:337.5px;width:117px;height:5px;background:linear-gradient(90deg,#ec4482,#8a3c90 60%,#2e3f90);border:1px solid #474747;"></div>
<svg style="position:absolute;left:680px;top:343px;" width="10" height="10" viewBox="0 0 10 10"><path d="M5 0 L10 4 L10 10 L0 10 L0 4 Z" fill="#cfcfcf"/></svg>
<div style="position:absolute;left:694px;top:333.5px;width:56px;height:21px;background:#ffffff;border:1.5px solid #4d9df0;border-radius:3px;"></div>
<div style="position:absolute;left:698.5px;top:336px;width:21.5px;height:14px;background:#0a64d8;"></div>
<div id="t68" class="tx" style="position:absolute;left:699px;top:336.60px;font-size:13px;line-height:13px;color:#ffffff;font-weight:normal;white-space:nowrap;font-family:'Liberation Sans', sans-serif;transform:scaleX(0.9446);transform-origin:left top;">100</div>
<div style="position:absolute;left:720px;top:336px;width:1px;height:14px;background:#e07020;"></div>
<div id="t69" class="tx" style="position:absolute;left:754px;top:337.00px;font-size:13px;line-height:13px;color:#f2f2f2;font-weight:normal;white-space:nowrap;font-family:'Liberation Sans', sans-serif;transform:scaleX(0.9514);transform-origin:left top;">%</div>
<div style="position:absolute;left:568px;top:363.5px;width:117px;height:5px;background:linear-gradient(90deg,#00b4e6,#0070b8 55%,#2b3f90);border:1px solid #474747;"></div>
<svg style="position:absolute;left:668px;top:369px;" width="10" height="10" viewBox="0 0 10 10"><path d="M5 0 L10 4 L10 10 L0 10 L0 4 Z" fill="#cfcfcf"/></svg>
<div style="position:absolute;left:694px;top:359.5px;width:56px;height:21px;background:#434343;border:1px solid #6a6a6a;border-radius:3px;"></div>
<div id="t70" class="tx" style="position:absolute;left:699px;top:362.60px;font-size:13px;line-height:13px;color:#f2f2f2;font-weight:normal;white-space:nowrap;font-family:'Liberation Sans', sans-serif;transform:scaleX(0.9261);transform-origin:left top;">90</div>
<div id="t71" class="tx" style="position:absolute;left:754px;top:363.00px;font-size:13px;line-height:13px;color:#f2f2f2;font-weight:normal;white-space:nowrap;font-family:'Liberation Sans', sans-serif;transform:scaleX(0.9514);transform-origin:left top;">%</div>
<div style="position:absolute;left:568px;top:389.5px;width:117px;height:5px;background:linear-gradient(90deg,#27409a,#2c3e70 50%,#2c4040);border:1px solid #474747;"></div>
<svg style="position:absolute;left:574.5px;top:395px;" width="10" height="10" viewBox="0 0 10 10"><path d="M5 0 L10 4 L10 10 L0 10 L0 4 Z" fill="#cfcfcf"/></svg>
<div style="position:absolute;left:694px;top:385.5px;width:56px;height:21px;background:#434343;border:1px solid #6a6a6a;border-radius:3px;"></div>
<div id="t72" class="tx" style="position:absolute;left:699px;top:388.60px;font-size:13px;line-height:13px;color:#f2f2f2;font-weight:normal;white-space:nowrap;font-family:'Liberation Sans', sans-serif;transform:scaleX(0.9261);transform-origin:left top;">10</div>
<div id="t73" class="tx" style="position:absolute;left:754px;top:389.00px;font-size:13px;line-height:13px;color:#f2f2f2;font-weight:normal;white-space:nowrap;font-family:'Liberation Sans', sans-serif;transform:scaleX(0.9514);transform-origin:left top;">%</div>
<div style="position:absolute;left:568px;top:415.5px;width:117px;height:5px;background:linear-gradient(90deg,#243b92,#0d1a5a 55%,#000000);border:1px solid #474747;"></div>
<svg style="position:absolute;left:564px;top:421px;" width="10" height="10" viewBox="0 0 10 10"><path d="M5 0 L10 4 L10 10 L0 10 L0 4 Z" fill="#cfcfcf"/></svg>
<div style="position:absolute;left:694px;top:411.5px;width:56px;height:21px;background:#434343;border:1px solid #6a6a6a;border-radius:3px;"></div>
<div id="t74" class="tx" style="position:absolute;left:699px;top:414.60px;font-size:13px;line-height:13px;color:#f2f2f2;font-weight:normal;white-space:nowrap;font-family:'Liberation Sans', sans-serif;transform:scaleX(0.8847);transform-origin:left top;">0</div>
<div id="t75" class="tx" style="position:absolute;left:754px;top:415.00px;font-size:13px;line-height:13px;color:#f2f2f2;font-weight:normal;white-space:nowrap;font-family:'Liberation Sans', sans-serif;transform:scaleX(0.9514);transform-origin:left top;">%</div>
<div style="position:absolute;left:826px;top:199px;width:95px;height:26px;border:2px solid #f0f0f0;border-radius:13px;"></div>
<div id="t76" class="tx" style="position:absolute;left:864.5px;top:205.60px;font-size:13px;line-height:13px;color:#f2f2f2;font-weight:normal;white-space:nowrap;font-family:'Liberation Sans', sans-serif;transform:scaleX(0.9576);transform-origin:left top;">OK</div>
<div style="position:absolute;left:826px;top:235px;width:95px;height:26px;border:1px solid #e8e8e8;border-radius:13px;"></div>
<div id="t77" class="tx" style="position:absolute;left:855.3px;top:241.40px;font-size:13px;line-height:13px;color:#f2f2f2;font-weight:normal;white-space:nowrap;font-family:'Liberation Sans', sans-serif;transform:scaleX(0.9019);transform-origin:left top;">Cancel</div>
<div style="position:absolute;left:827px;top:275px;width:12px;height:12px;border:1px solid #d8d8d8;border-radius:1px;"></div>
<div id="t78" class="tx" style="position:absolute;left:846px;top:274.30px;font-size:13px;line-height:13px;color:#f2f2f2;font-weight:normal;white-space:nowrap;font-family:'Liberation Sans', sans-serif;transform:scaleX(0.9297);transform-origin:left top;"><u>P</u>review</div>
<div style="position:absolute;left:10px;top:99px;width:72px;height:449px;background:#535353;border:1px solid #3e3e3e;border-top:none;border-radius:4px 4px 0 0;box-shadow:0 0 2px rgba(0,0,0,0.3);"></div>
<div style="position:absolute;left:10px;top:99px;width:72px;height:13px;background:#434343;border-radius:4px 4px 0 0;border-bottom:1px solid #3a3a3a;"></div>
<div style="position:absolute;left:17px;top:128px;width:28px;height:22px;background:#303030;border-radius:3px;"></div>
<div style="position:absolute;left:11px;top:200px;width:70px;height:1px;background:#4a4a4a;"></div>
<div style="position:absolute;left:11px;top:276px;width:70px;height:1px;background:#4a4a4a;"></div>
<div style="position:absolute;left:11px;top:326px;width:70px;height:1px;background:#4a4a4a;"></div>
<div style="position:absolute;left:11px;top:378px;width:70px;height:1px;background:#4a4a4a;"></div>
<div style="position:absolute;left:11px;top:516px;width:70px;height:1px;background:#4a4a4a;"></div>
<svg style="position:absolute;left:0px;top:0px;pointer-events:none;" width="1360" height="729" viewBox="0 0 1360 729"><path d="M54 103 L51.5 105.5 L54 108 M58 103 L55.5 105.5 L58 108" stroke="#bdbdbd" stroke-width="1.3" fill="none"/><path d="M70.5 102.5 L76 108.5 M76 102.5 L70.5 108.5" stroke="#9a9a9a" stroke-width="2"/><rect x="36" y="116" width="1" height="4" fill="#3a3a3a"/><rect x="38" y="116" width="1" height="4" fill="#3a3a3a"/><rect x="40" y="116" width="1" height="4" fill="#3a3a3a"/><rect x="42" y="116" width="1" height="4" fill="#3a3a3a"/><rect x="44" y="116" width="1" height="4" fill="#3a3a3a"/><rect x="46" y="116" width="1" height="4" fill="#3a3a3a"/><rect x="48" y="116" width="1" height="4" fill="#3a3a3a"/><rect x="50" y="116" width="1" height="4" fill="#3a3a3a"/><rect x="52" y="116" width="1" height="4" fill="#3a3a3a"/><rect x="54" y="116" width="1" height="4" fill="#3a3a3a"/><path d="M26 131.5 L26 147.5 L30.3 142.6 L37.6 142.4 Z" stroke="#d0d0d0" stroke-width="1.2" fill="none" stroke-linejoin="miter"/><path d="M56 131 L56 148 L60.3 142.6 L68 142.4 Z" fill="#c8c8c8"/><path d="M25.5 155.5 L33 155.5 L36.5 159 L36.5 163 M36.5 163 M25.5 155.5 L25.5 168.5 L33 168.5" stroke="#c8c8c8" stroke-width="1.1" fill="none"/><path d="M33 155.5 L33 159 L36.5 159" stroke="#c8c8c8" stroke-width="1.1" fill="none"/><path d="M34 163.5 L34 170.5 L35.8 168.8 L39.5 168.5 Z" fill="#c8c8c8"/><rect x="52.5" y="156" width="1.8" height="14" fill="#c8c8c8"/><rect x="68.2" y="156" width="1.8" height="14" fill="#c8c8c8"/><path d="M56 163 L66.5 163" stroke="#c8c8c8" stroke-width="1.5"/><path d="M55.5 163 L58.5 160 L58.5 166 Z M67 163 L64 160 L64 166 Z" fill="#c8c8c8"/><path d="M24.8 185 L24.8 195.2 L37.2 195.2 L37.2 185" stroke="#c8c8c8" stroke-width="1.6" fill="none"/><rect x="27" y="188.5" width="2" height="2" fill="#c8c8c8"/><rect x="30" y="188.5" width="2" height="2" fill="#c8c8c8"/><rect x="33" y="188.5" width="2" height="2" fill="#c8c8c8"/><rect x="27" y="191.5" width="2" height="2" fill="#c8c8c8"/><rect x="30" y="191.5" width="2" height="2" fill="#c8c8c8"/><rect x="33" y="191.5" width="2" height="2" fill="#c8c8c8"/><path d="M26.5 180 L30.5 184" stroke="#c8c8c8" stroke-width="1.6"/><path d="M32 185.5 L32 181.5 L28 185.5 Z" fill="#c8c8c8"/><path d="M54.8 185 L54.8 195.2 L67.2 195.2 L67.2 185" stroke="#c8c8c8" stroke-width="1.6" fill="none"/><rect x="57" y="188.5" width="2" height="2" fill="#c8c8c8"/><rect x="60" y="188.5" width="2" height="2" fill="#c8c8c8"/><rect x="63" y="188.5" width="2" height="2" fill="#c8c8c8"/><rect x="57" y="191.5" width="2" height="2" fill="#c8c8c8"/><rect x="60" y="191.5" width="2" height="2" fill="#c8c8c8"/><rect x="63" y="191.5" width="2" height="2" fill="#c8c8c8"/><path d="M60 185 L64.5 180.5" stroke="#c8c8c8" stroke-width="1.6"/><path d="M67 178.5 L67 183 L62.5 178.5 Z" fill="#c8c8c8"/><path d="M24 207 L38.2 207 L38.2 211.5 L36.8 211.5 L36.8 209 L33 209 L33 218.5 L34.3 218.5 L34.3 220.5 L28 220.5 L28 218.5 L29.4 218.5 L29.4 209 L25.5 209 L25.5 211.5 L24 211.5 Z" fill="#c8c8c8"/><path d="M53.8 220.6 L68 207" stroke="#c8c8c8" stroke-width="1.5"/><path d="M33.5 232.5 L36.5 229.5 L39 232 L36 235 Z" fill="#c8c8c8"/><path d="M33 233.5 L35.5 236 L34.5 240.5 L24.5 246 L23 244.5 L28.5 234.5 Z" fill="#c8c8c8"/><path d="M24.5 245.5 L29 241" stroke="#535353" stroke-width="0.9"/><path d="M64 232.5 L67 229.5 L69.5 232 L66.5 235 Z" fill="#c8c8c8"/><path d="M63.3 233.5 L65.8 236 L57 245 L53 246.5 L54.5 242.5 Z" fill="#c8c8c8"/><path d="M53 246.5 L55.5 244" stroke="#535353" stroke-width="0.9"/><rect x="23.6" y="255.6" width="15" height="13" stroke="#c8c8c8" stroke-width="1.3" fill="none"/><path d="M23.6 255.6 L38.6 268.6 M38.6 255.6 L23.6 268.6" stroke="#c8c8c8" stroke-width="1.1"/><rect x="53.6" y="255.6" width="15" height="13" stroke="#c8c8c8" stroke-width="1.3" fill="#6a6a6a"/><path d="M41 224 L44.5 224 L44.5 220.5 Z" fill="#c8c8c8"/><path d="M41 248 L44.5 248 L44.5 244.5 Z" fill="#c8c8c8"/><path d="M71 248 L74.5 248 L74.5 244.5 Z" fill="#c8c8c8"/><path d="M41 272 L44.5 272 L44.5 268.5 Z" fill="#c8c8c8"/><path d="M71 272 L74.5 272 L74.5 268.5 Z" fill="#c8c8c8"/><path d="M71 298 L74.5 298 L74.5 294.5 Z" fill="#c8c8c8"/><path d="M71 350 L74.5 350 L74.5 346.5 Z" fill="#c8c8c8"/><circle cx="37" cy="283.8" r="2.6" stroke="#c8c8c8" stroke-width="1.3" fill="none"/><circle cx="37" cy="294" r="2.6" stroke="#c8c8c8" stroke-width="1.3" fill="none"/><path d="M22.5 286 L34.8 292.5 M22.5 292 L34.8 285.5" stroke="#c8c8c8" stroke-width="1.6"/><rect x="58.5" y="283.5" width="11" height="11" stroke="#c8c8c8" stroke-width="1" stroke-dasharray="1.5 1.5" fill="none"/><path d="M52 281 L52 294 L55.5 290 L62 290 Z" fill="#c8c8c8"/><defs><linearGradient id="gs" x1="0" x2="1" y1="0" y2="0.3"><stop offset="0" stop-color="#c0c0c0"/><stop offset="1" stop-color="#4a4a4a"/></linearGradient><linearGradient id="gf" x1="0" x2="0" y1="0" y2="1"><stop offset="0" stop-color="#6a6a6a"/><stop offset="1" stop-color="#d0d0d0"/></linearGradient></defs><rect x="23.5" y="306.5" width="15" height="13" stroke="#c8c8c8" stroke-width="1" fill="url(#gs)"/><rect x="53.5" y="306.5" width="15" height="13" stroke="#c8c8c8" stroke-width="1" fill="url(#gf)"/><rect x="54.0" y="307" width="1.75" height="1.75" fill="#555"/><rect x="57.5" y="307" width="1.75" height="1.75" fill="#555"/><rect x="61.0" y="307" width="1.75" height="1.75" fill="#555"/><rect x="64.5" y="307" width="1.75" height="1.75" fill="#555"/><rect x="54" y="307" width="14" height="5" fill="#777" opacity="0.4"/><path d="M24 332.5 L38 332.5 L38 343 L34 347 L24 347 Z" fill="#c8c8c8"/><path d="M26.5 336 L35.5 336 M26.5 339 L35.5 339 M26.5 342 L31.5 342" stroke="#535353" stroke-width="1.2"/><path d="M34.5 347 L38 343.5 L34.5 343.5 Z" fill="#535353"/><path d="M35.5 347.5 L39 344 L39 347.5 Z" fill="#c8c8c8"/><path d="M66 331.5 L70 335.5 L68 337.5 L64 333.5 Z" fill="#c8c8c8"/><path d="M62.5 334.5 L67.5 339.5" stroke="#c8c8c8" stroke-width="2"/><path d="M64 337 L55 346 C53 348,52.5 349,53.5 349.5 C54.5 350,55.5 349,57.5 347 L66 338.5" stroke="#c8c8c8" stroke-width="1.3" fill="none"/><rect x="60" y="345" width="10" height="4.5" fill="#c8c8c8"/><rect x="61.5" y="346.5" width="2" height="1.6" fill="#535353"/><rect x="64.5" y="346.5" width="2" height="1.6" fill="#535353"/><rect x="67.5" y="346.5" width="1.5" height="1.6" fill="#535353"/><path d="M28.8 358.5 L28.8 365 M31.8 356.5 L31.8 365 M34.8 357 L34.8 365 M37.6 360 L37.6 366 M23.2 362.8 L27.5 367.5" stroke="#c8c8c8" stroke-width="2.3" stroke-linecap="round"/><path d="M27 363.5 L38.7 363.5 L38.2 368.5 Q37 372.5 33.5 372.5 L30.5 372.5 Q27.5 372 25.5 369.5 Z" fill="#c8c8c8"/><circle cx="59.8" cy="361.8" r="5.6" stroke="#c8c8c8" stroke-width="1.5" fill="none"/><path d="M64 366 L68.8 371" stroke="#c8c8c8" stroke-width="2.4"/></svg>
<div style="position:absolute;left:39px;top:401px;width:33px;height:33px;background:#ffffff;"></div>
<div style="position:absolute;left:47px;top:409px;width:17px;height:17px;background:#535353;"></div>
<div style="position:absolute;left:20px;top:382px;width:35px;height:35px;background:#ffffff;box-shadow:0 0 0 1px #3a3a3a;"></div>
<div style="position:absolute;left:21px;top:383px;width:33px;height:33px;background:#263f8e;"></div>
<div style="position:absolute;left:25px;top:445px;width:18px;height:17px;background:#303030;border-radius:3px;"></div>
<div style="position:absolute;left:17px;top:467px;width:18px;height:18px;background:#303030;border-radius:3px;"></div>
<div style="position:absolute;left:17px;top:520px;width:28px;height:21px;background:#303030;border-radius:3px;"></div>
<svg style="position:absolute;left:0px;top:0px;pointer-events:none;" width="1360" height="729" viewBox="0 0 1360 729"><path d="M40.5 432.5 L70.5 402.5" stroke="#ff1a1a" stroke-width="2"/><path d="M66.5 386 Q72 386 72.5 391.5" stroke="#c8c8c8" stroke-width="1.5" fill="none"/><path d="M64 386 L67.5 382.8 L67.5 389.2 Z M72.5 394.5 L69.3 390.8 L75.7 390.8 Z" fill="#c8c8c8"/><rect x="24.5" y="426.5" width="7" height="7" fill="#1a1a1a" stroke="#c8c8c8" stroke-width="1"/><rect x="20.5" y="422.5" width="7" height="7" fill="#ffffff" stroke="#1a1a1a" stroke-width="1"/><path d="M21 429 L27 423" stroke="#ff1a1a" stroke-width="1.2"/><rect x="29.5" y="449" width="9" height="9" stroke="#c8c8c8" stroke-width="1.1" fill="none"/><path d="M52 446.5 L62 446.5 L62 449.5 L61 449.5 L61 447.8 L58 447.8 L58 456 L59.3 456 L59.3 457.5 L54.7 457.5 L54.7 456 L56 456 L56 447.8 L53 447.8 L53 449.5 L52 449.5 Z" fill="#c8c8c8"/><rect x="20.5" y="470.5" width="11" height="11" fill="#263f8e" stroke="#c8c8c8" stroke-width="1"/><defs><linearGradient id="ga" x1="0" x2="1"><stop offset="0" stop-color="#ffffff"/><stop offset="1" stop-color="#222"/></linearGradient></defs><rect x="40.5" y="470.5" width="11" height="11" fill="url(#ga)" stroke="#c8c8c8" stroke-width="1"/><rect x="60.5" y="470.5" width="11" height="11" fill="#ffffff" stroke="#c8c8c8" stroke-width="1"/><path d="M61 481 L71 471" stroke="#ff1a1a" stroke-width="1.4"/><rect x="29" y="502" width="9" height="6" fill="#c8c8c8"/><path d="M31.5 498 L31.5 500 M34.5 498 L34.5 500 M37.5 498 L37.5 500 M25 502.5 L28 502.5 M25 505.5 L28 505.5 M25 507.5 L28 507.5 M25 500.5 L28.5 500.5 L28.5 498" stroke="#c8c8c8" stroke-width="1" fill="none"/><path d="M41 513 L44 513 L44 510 Z" fill="#c8c8c8"/><rect x="26.5" y="525.5" width="11" height="11" stroke="#c8c8c8" stroke-width="1" fill="none"/><rect x="26.5" y="525.5" width="11" height="1.5" fill="#c8c8c8"/><rect x="28.5" y="528.5" width="5" height="4" stroke="#c8c8c8" stroke-width="1" fill="#535353"/><rect x="30.5" y="530.5" width="5" height="4" stroke="#c8c8c8" stroke-width="1" fill="#303030"/><rect x="56.5" y="525.5" width="11" height="11" stroke="#c8c8c8" stroke-width="1" fill="#6a6a6a"/><rect x="56.5" y="525.5" width="11" height="2.5" fill="#c8c8c8"/><path d="M71 540 L74 540 L74 537 Z" fill="#c8c8c8"/></svg>
<div id="t79" style="position:absolute;left:63.5px;top:43.11px;font-size:10.5px;line-height:10.5px;color:#e6e6e6;font-weight:bold;white-space:nowrap;font-family:'Liberation Sans', sans-serif;transform:scaleX(0.9238);transform-origin:left top;">X:</div>
<div id="t80" style="position:absolute;left:63.5px;top:69.11px;font-size:10.5px;line-height:10.5px;color:#e6e6e6;font-weight:bold;white-space:nowrap;font-family:'Liberation Sans', sans-serif;transform:scaleX(0.9965);transform-origin:left top;">Y:</div>
<div id="t81" style="position:absolute;left:176.5px;top:43.11px;font-size:10.5px;line-height:10.5px;color:#e6e6e6;font-weight:bold;white-space:nowrap;font-family:'Liberation Sans', sans-serif;transform:scaleX(0.9456);transform-origin:left top;">W:</div>
<div id="t82" style="position:absolute;left:177.5px;top:69.11px;font-size:10.5px;line-height:10.5px;color:#e6e6e6;font-weight:bold;white-space:nowrap;font-family:'Liberation Sans', sans-serif;transform:scaleX(0.9014);transform-origin:left top;">H:</div>
<div style="position:absolute;left:78px;top:37px;width:87px;height:21px;background:#595959;border-radius:3px;"></div>
<div style="position:absolute;left:78px;top:37px;width:17px;height:21px;background:#5e5e5e;border-radius:3px 0 0 3px;"></div>
<div style="position:absolute;left:78px;top:63px;width:87px;height:21px;background:#595959;border-radius:3px;"></div>
<div style="position:absolute;left:78px;top:63px;width:17px;height:21px;background:#5e5e5e;border-radius:3px 0 0 3px;"></div>
<div style="position:absolute;left:191px;top:37px;width:87px;height:21px;background:#595959;border-radius:3px;"></div>
<div style="position:absolute;left:191px;top:37px;width:17px;height:21px;background:#5e5e5e;border-radius:3px 0 0 3px;"></div>
<div style="position:absolute;left:191px;top:63px;width:87px;height:21px;background:#595959;border-radius:3px;"></div>
<div style="position:absolute;left:191px;top:63px;width:17px;height:21px;background:#5e5e5e;border-radius:3px 0 0 3px;"></div>
<div style="position:absolute;left:312px;top:37px;width:1px;height:47px;background:#474747;"></div>
<div style="position:absolute;left:339px;top:37px;width:87px;height:21px;background:#595959;border-radius:3px;"></div>
<div style="position:absolute;left:339px;top:63px;width:87px;height:21px;background:#595959;border-radius:3px;"></div>
<div style="position:absolute;left:481px;top:37px;width:87px;height:21px;background:#595959;border-radius:3px;"></div>
<div style="position:absolute;left:481px;top:63px;width:87px;height:21px;background:#595959;border-radius:3px;"></div>
<div style="position:absolute;left:432px;top:49px;width:22px;height:22px;background:#2f2f2f;border-radius:3px;"></div>
<div style="position:absolute;left:573px;top:37px;width:1px;height:47px;background:#474747;"></div>
<div style="position:absolute;left:643.5px;top:47.8px;font-family:'Liberation Serif',serif;font-size:23px;line-height:23px;color:#9a9a9a;">P</div>
<div style="position:absolute;left:670px;top:37px;width:1px;height:47px;background:#474747;"></div>
<div style="position:absolute;left:732px;top:37px;width:1px;height:47px;background:#474747;"></div>
<div style="position:absolute;left:738px;top:37.5px;width:21px;height:20px;background:#263f8e;border:1px solid #3a3a3a;"></div>
<div style="position:absolute;left:762px;top:37.5px;width:17px;height:20px;border:1px solid #6a6a6a;border-radius:3px;"></div>
<div style="position:absolute;left:738px;top:63.5px;width:21px;height:20px;background:#ffffff;"></div>
<div style="position:absolute;left:742.5px;top:67.5px;width:11px;height:11px;background:#535353;"></div>
<div style="position:absolute;left:762px;top:63.5px;width:17px;height:20px;border:1px solid #6a6a6a;border-radius:3px;"></div>
<div style="position:absolute;left:784px;top:37px;width:1px;height:47px;background:#474747;"></div>
<div style="position:absolute;left:790px;top:37.5px;width:87px;height:20px;background:#424242;border:1px solid #6a6a6a;border-radius:3px;"></div>
<div style="position:absolute;left:807px;top:38px;width:1px;height:19px;background:#6a6a6a;"></div>
<div style="position:absolute;left:858px;top:38px;width:1px;height:19px;background:#6a6a6a;"></div>
<div id="t83" class="tx" style="position:absolute;left:811px;top:42.27px;font-size:11.5px;line-height:11.5px;color:#e8e8e8;font-weight:normal;white-space:nowrap;font-family:'Liberation Sans', sans-serif;transform:scaleX(1.0163);transform-origin:left top;">0 pt</div>
<div style="position:absolute;left:790px;top:63.5px;width:87px;height:20px;background:#424242;border:1px solid #6a6a6a;border-radius:3px;"></div>
<div style="position:absolute;left:791px;top:64.5px;width:67px;height:18px;background:#e6e6e6;"></div>
<div style="position:absolute;left:794.5px;top:69.5px;width:60.5px;height:8.5px;background:#000;"></div>
<div style="position:absolute;left:858px;top:64px;width:1px;height:19px;background:#6a6a6a;"></div>
<div style="position:absolute;left:882.5px;top:37px;width:1px;height:47px;background:#474747;"></div>
<div style="position:absolute;left:951.5px;top:39px;font-family:'Liberation Sans',sans-serif;font-style:italic;font-size:15px;line-height:15px;color:#b0b0b0;letter-spacing:-0.5px;">fx</div>
<div style="position:absolute;left:909px;top:63px;width:70px;height:21px;background:#424242;border:1px solid #6a6a6a;border-radius:3px;"></div>
<div style="position:absolute;left:960px;top:64px;width:1px;height:19px;background:#6a6a6a;"></div>
<div id="t84" class="tx" style="position:absolute;left:913.5px;top:66.57px;font-size:11.5px;line-height:11.5px;color:#e8e8e8;font-weight:normal;white-space:nowrap;font-family:'Liberation Sans', sans-serif;transform:scaleX(0.8055);transform-origin:left top;">100%</div>
<div style="position:absolute;left:984.5px;top:37px;width:1px;height:47px;background:#474747;"></div>
<div style="position:absolute;left:991px;top:36px;width:22px;height:22px;background:#2f2f2f;border-radius:3px;"></div>
<div style="position:absolute;left:1046px;top:37px;width:1px;height:47px;background:#474747;"></div>
<div style="position:absolute;left:1073px;top:37px;width:87px;height:21px;background:#424242;border:1px solid #6a6a6a;border-radius:3px;"></div>
<div style="position:absolute;left:1091px;top:38px;width:1px;height:19px;background:#6a6a6a;"></div>
<div id="t85" class="tx" style="position:absolute;left:1095.5px;top:42.27px;font-size:11.5px;line-height:11.5px;color:#e8e8e8;font-weight:normal;white-space:nowrap;font-family:'Liberation Sans', sans-serif;transform:scaleX(0.8599);transform-origin:left top;">1p0</div>
<div style="position:absolute;left:1073px;top:63.5px;width:87px;height:20px;background:#424242;border:1px solid #6a6a6a;border-radius:3px;"></div>
<div style="position:absolute;left:1074px;top:64.5px;width:67.5px;height:18px;background:#e6e6e6;"></div>
<div style="position:absolute;left:1077px;top:67px;width:64px;height:1px;background:#333;"></div>
<div style="position:absolute;left:1137px;top:67px;width:1.5px;height:13px;background:#111;"></div>
<div style="position:absolute;left:1141.5px;top:64px;width:1px;height:19px;background:#6a6a6a;"></div>
<div style="position:absolute;left:1165.5px;top:37px;width:1px;height:47px;background:#474747;"></div>
<div style="position:absolute;left:1337.5px;top:37px;width:1px;height:47px;background:#474747;"></div>
<svg style="position:absolute;left:0px;top:0px;pointer-events:none;" width="1360" height="729" viewBox="0 0 1360 729"><rect x="5" y="51" width="3" height="1" fill="#3a3a3a"/><rect x="5" y="53" width="3" height="1" fill="#3a3a3a"/><rect x="5" y="55" width="3" height="1" fill="#3a3a3a"/><rect x="5" y="57" width="3" height="1" fill="#3a3a3a"/><rect x="5" y="59" width="3" height="1" fill="#3a3a3a"/><rect x="5" y="61" width="3" height="1" fill="#3a3a3a"/><rect x="5" y="63" width="3" height="1" fill="#3a3a3a"/><rect x="5" y="65" width="3" height="1" fill="#3a3a3a"/><rect x="5" y="67" width="3" height="1" fill="#3a3a3a"/><rect x="5" y="69" width="3" height="1" fill="#3a3a3a"/><rect x="28.5" y="48.5" width="6" height="6" stroke="#d8d8d8" stroke-width="1" fill="#f2f2f2"/><rect x="37.5" y="48.5" width="6" height="6" stroke="#d8d8d8" stroke-width="1" fill="none"/><rect x="46.5" y="48.5" width="6" height="6" stroke="#d8d8d8" stroke-width="1" fill="none"/><rect x="28.5" y="57.5" width="6" height="6" stroke="#d8d8d8" stroke-width="1" fill="none"/><rect x="37.5" y="57.5" width="6" height="6" stroke="#d8d8d8" stroke-width="1" fill="none"/><rect x="46.5" y="57.5" width="6" height="6" stroke="#d8d8d8" stroke-width="1" fill="none"/><rect x="28.5" y="66.5" width="6" height="6" stroke="#d8d8d8" stroke-width="1" fill="none"/><rect x="37.5" y="66.5" width="6" height="6" stroke="#d8d8d8" stroke-width="1" fill="none"/><rect x="46.5" y="66.5" width="6" height="6" stroke="#d8d8d8" stroke-width="1" fill="none"/><line x1="35" y1="51.5" x2="37" y2="51.5" stroke="#d8d8d8"/><line x1="44" y1="51.5" x2="46" y2="51.5" stroke="#d8d8d8"/><line x1="35" y1="69.5" x2="37" y2="69.5" stroke="#d8d8d8"/><line x1="44" y1="69.5" x2="46" y2="69.5" stroke="#d8d8d8"/><line x1="31.5" y1="55" x2="31.5" y2="57" stroke="#d8d8d8"/><line x1="31.5" y1="64" x2="31.5" y2="66" stroke="#d8d8d8"/><line x1="49.5" y1="55" x2="49.5" y2="57" stroke="#d8d8d8"/><line x1="49.5" y1="64" x2="49.5" y2="66" stroke="#d8d8d8"/><path d="M83 45.5 L86.5 42 L90 45.5" stroke="#a0a0a0" stroke-width="1" fill="none"/><path d="M83 50 L86.5 53.5 L90 50" stroke="#a0a0a0" stroke-width="1" fill="none"/><path d="M83 71.5 L86.5 68 L90 71.5" stroke="#a0a0a0" stroke-width="1" fill="none"/><path d="M83 76 L86.5 79.5 L90 76" stroke="#a0a0a0" stroke-width="1" fill="none"/><path d="M196 45.5 L199.5 42 L203 45.5" stroke="#a0a0a0" stroke-width="1" fill="none"/><path d="M196 50 L199.5 53.5 L203 50" stroke="#a0a0a0" stroke-width="1" fill="none"/><path d="M196 71.5 L199.5 68 L203 71.5" stroke="#a0a0a0" stroke-width="1" fill="none"/><path d="M196 76 L199.5 79.5 L203 76" stroke="#a0a0a0" stroke-width="1" fill="none"/><rect x="291.5" y="53" width="6" height="12" rx="3" stroke="#c0c0c0" stroke-width="1.5" fill="none"/><path d="M288.5 52.5 L301 65.5" stroke="#535353" stroke-width="2.5"/><path d="M288.5 52.5 L301 65.5" stroke="#c0c0c0" stroke-width="1.3"/><path d="M320.5 55 L320.5 41.5 L334 41.5" stroke="#c8c8c8" stroke-width="1.2" fill="none"/><path d="M333.8 43 L333.8 54.8 L321.5 54.8" stroke="#c8c8c8" stroke-width="1" stroke-dasharray="1 1" fill="none"/><path d="M322.5 48 L329 48" stroke="#c8c8c8" stroke-width="2"/><path d="M332 48 L328 44.5 L328 51.5 Z" fill="#c8c8c8"/><path d="M320.5 81 L320.5 67.5 L334 67.5" stroke="#c8c8c8" stroke-width="1.2" fill="none"/><path d="M333.8 69 L333.8 80.8 L321.5 80.8" stroke="#c8c8c8" stroke-width="1" stroke-dasharray="1 1" fill="none"/><path d="M327 69.5 L327 76" stroke="#c8c8c8" stroke-width="2"/><path d="M327 79 L323.5 75 L330.5 75 Z" fill="#c8c8c8"/><path d="M344 45.5 L347.5 42 L351 45.5" stroke="#a0a0a0" stroke-width="1" fill="none"/><path d="M344 50 L347.5 53.5 L351 50" stroke="#a0a0a0" stroke-width="1" fill="none"/><path d="M413 45.5 L417.0 49.5 L421 45.5" stroke="#c0c0c0" stroke-width="1" fill="none"/><path d="M344 71.5 L347.5 68 L351 71.5" stroke="#a0a0a0" stroke-width="1" fill="none"/><path d="M344 76 L347.5 79.5 L351 76" stroke="#a0a0a0" stroke-width="1" fill="none"/><path d="M413 71.5 L417.0 75.5 L421 71.5" stroke="#c0c0c0" stroke-width="1" fill="none"/><path d="M486 45.5 L489.5 42 L493 45.5" stroke="#a0a0a0" stroke-width="1" fill="none"/><path d="M486 50 L489.5 53.5 L493 50" stroke="#a0a0a0" stroke-width="1" fill="none"/><path d="M555 45.5 L559.0 49.5 L563 45.5" stroke="#c0c0c0" stroke-width="1" fill="none"/><path d="M486 71.5 L489.5 68 L493 71.5" stroke="#a0a0a0" stroke-width="1" fill="none"/><path d="M486 76 L489.5 79.5 L493 76" stroke="#a0a0a0" stroke-width="1" fill="none"/><path d="M555 71.5 L559.0 75.5 L563 71.5" stroke="#c0c0c0" stroke-width="1" fill="none"/><rect x="440" y="53" width="5.5" height="7.5" rx="2.75" stroke="#e0e0e0" stroke-width="1.4" fill="none"/><rect x="440" y="58.5" width="5.5" height="7.5" rx="2.75" stroke="#e0e0e0" stroke-width="1.4" fill="none"/><path d="M464.5 51.5 L474.5 51.5 M464.5 51.5 L471.5 43.5" stroke="#d0d0d0" stroke-width="1.5" fill="none"/><path d="M469.5 46.5 C471.5 47.5,472.5 49.5,472.5 51.5" stroke="#d0d0d0" stroke-width="1.1" fill="none"/><path d="M466 79.5 L470 71 L475 71 L471 79.5 Z" fill="#d0d0d0"/><path d="M596 44 A7.5 7.5 0 1 0 598 48.5" stroke="#8a8a8a" stroke-width="1.4" fill="none" stroke-dasharray="30 1.5 1 1.5 1 1.5 1 1.5 1 1.5"/><path d="M599 38.5 L599 45.5 L592.5 45.5 Z" fill="#8a8a8a"/><path d="M612.5 44 A7.5 7.5 0 1 1 610.5 48.5" stroke="#8a8a8a" stroke-width="1.4" fill="none" stroke-dasharray="30 1.5 1 1.5 1 1.5 1 1.5 1 1.5"/><path d="M609.5 38.5 L609.5 45.5 L616 45.5 Z" fill="#8a8a8a"/><path d="M582.5 66.5 L589 73.5 L582.5 80.5 Z" stroke="#8a8a8a" stroke-width="1" fill="none"/><path d="M599 66 L592.5 73.5 L599 81 Z" fill="#8a8a8a"/><path d="M590.5 65 L590.5 82" stroke="#8a8a8a" stroke-width="1" stroke-dasharray="1 1"/><path d="M612 65.5 L624 65.5 L618 71 Z" stroke="#8a8a8a" stroke-width="1" fill="none"/><path d="M610.5 81.5 L625.5 81.5 L618 75 Z" fill="#8a8a8a"/><path d="M610 73 L626 73" stroke="#8a8a8a" stroke-width="1" stroke-dasharray="1 1"/><path d="M638.5 51 L638.5 48.5 L641.5 48.5 M660 48.5 L663 48.5 L663 51 M638.5 69.5 L638.5 72 L641.5 72 M660 72 L663 72 L663 69.5" stroke="#8a8a8a" stroke-width="1" fill="none"/><rect x="685.5" y="44.5" width="3" height="3" stroke="#b8b8b8" stroke-width="1" fill="none"/><path d="M687.5 48 L687.5 50.5 M682.5 51.5 L682.5 50.5 L692.5 50.5 L692.5 51.5 M687.5 50.5 L687.5 51.5" stroke="#b8b8b8" stroke-width="1" fill="none"/><rect x="680.5" y="51.5" width="3" height="3" stroke="#b8b8b8" stroke-width="1" fill="none"/><rect x="685.5" y="51.5" width="3" height="3" stroke="#b8b8b8" stroke-width="1" fill="none"/><rect x="690.5" y="51.5" width="3" height="3" stroke="#b8b8b8" stroke-width="1" fill="none"/><path d="M684 43 L687.5 38.5 L691 43 Z" fill="#8a8a8a"/><rect x="716.5" y="41.5" width="3" height="3" stroke="#c8c8c8" stroke-width="1" fill="none"/><path d="M718.5 45 L718.5 47.5 M713.5 48.5 L713.5 47.5 L723.5 47.5 L723.5 48.5 M718.5 47.5 L718.5 48.5" stroke="#c8c8c8" stroke-width="1" fill="none"/><rect x="711.5" y="48.5" width="3" height="3" stroke="#c8c8c8" stroke-width="1" fill="none"/><rect x="716.5" y="48.5" width="3" height="3" stroke="#c8c8c8" stroke-width="1" fill="none"/><rect x="721.5" y="48.5" width="3" height="3" stroke="#c8c8c8" stroke-width="1" fill="none"/><path d="M706 47 L710 42.5 L710 51.5 Z" fill="#c8c8c8"/><rect x="685.5" y="65.5" width="3" height="3" stroke="#b8b8b8" stroke-width="1" fill="none"/><path d="M687.5 69 L687.5 71.5 M682.5 72.5 L682.5 71.5 L692.5 71.5 L692.5 72.5 M687.5 71.5 L687.5 72.5" stroke="#b8b8b8" stroke-width="1" fill="none"/><rect x="680.5" y="72.5" width="3" height="3" stroke="#b8b8b8" stroke-width="1" fill="none"/><rect x="685.5" y="72.5" width="3" height="3" stroke="#b8b8b8" stroke-width="1" fill="none"/><rect x="690.5" y="72.5" width="3" height="3" stroke="#b8b8b8" stroke-width="1" fill="none"/><path d="M684 78 L687.5 82.5 L691 78 Z" fill="#8a8a8a"/><rect x="711.5" y="68.5" width="3" height="3" stroke="#c8c8c8" stroke-width="1" fill="none"/><path d="M713.5 72 L713.5 74.5 M708.5 75.5 L708.5 74.5 L718.5 74.5 L718.5 75.5 M713.5 74.5 L713.5 75.5" stroke="#c8c8c8" stroke-width="1" fill="none"/><rect x="706.5" y="75.5" width="3" height="3" stroke="#c8c8c8" stroke-width="1" fill="none"/><rect x="711.5" y="75.5" width="3" height="3" stroke="#c8c8c8" stroke-width="1" fill="none"/><rect x="716.5" y="75.5" width="3" height="3" stroke="#c8c8c8" stroke-width="1" fill="none"/><path d="M720 68.5 L724.5 73.5 L720 78.5 Z" fill="#c8c8c8"/><path d="M768.5 44 L772 47.5 L768.5 51" stroke="#d0d0d0" stroke-width="1" fill="none"/><path d="M739 82.5 L757.5 64.5" stroke="#ff1a1a" stroke-width="1.8"/><path d="M768.5 70 L772 73.5 L768.5 77" stroke="#d0d0d0" stroke-width="1" fill="none"/><path d="M794.5 46.5 L798.5 42.5 L802.5 46.5" stroke="#c8c8c8" stroke-width="1" fill="none"/><path d="M794.5 50.5 L798.5 54.5 L802.5 50.5" stroke="#c8c8c8" stroke-width="1" fill="none"/><path d="M863.5 45.5 L868.0 50.0 L872.5 45.5" stroke="#c8c8c8" stroke-width="1" fill="none"/><path d="M863.5 71.5 L868.0 76.0 L872.5 71.5" stroke="#c8c8c8" stroke-width="1" fill="none"/><path d="M893.5 44 A2.5 2.5 0 0 0 896 41.5 L901 41.5 A2.5 2.5 0 0 0 903.5 44 L903.5 49.5 A2.5 2.5 0 0 0 901 52 L896 52 A2.5 2.5 0 0 0 893.5 49.5 Z" stroke="#c8c8c8" stroke-width="1.2" fill="none"/><path d="M905 51.5 L908 51.5 L906.5 53.5 Z" fill="#c8c8c8"/><defs><linearGradient id="sh" x1="0" x2="0" y1="0" y2="1"><stop offset="0" stop-color="#b0b0b0"/><stop offset="1" stop-color="#535353"/></linearGradient></defs><rect x="922" y="51" width="13" height="5" fill="url(#sh)"/><rect x="923" y="41.5" width="11" height="11" stroke="#c8c8c8" stroke-width="1.3" fill="#535353"/><path d="M964 51.5 L967 51.5 L965.5 53.5 Z" fill="#c8c8c8"/><rect x="891.5" y="68.5" width="10" height="10" stroke="#c8c8c8" stroke-width="1" fill="#6a6a6a"/><rect x="892" y="69" width="3" height="3" fill="#a8a8a8"/><rect x="898" y="69" width="3" height="3" fill="#a8a8a8"/><rect x="895" y="72" width="3" height="3" fill="#a8a8a8"/><rect x="892" y="75" width="3" height="3" fill="#a8a8a8"/><rect x="898" y="75" width="3" height="3" fill="#a8a8a8"/><path d="M968.5 70 L972.5 73.5 L968.5 77" stroke="#d0d0d0" stroke-width="1" fill="none"/><path d="M995 40.5 L1009 40.5 M995 43.5 L1009 43.5 M995 50.5 L1009 50.5 M995 53.5 L1009 53.5" stroke="#d0d0d0" stroke-width="1"/><rect x="998" y="44.5" width="8" height="5" fill="#d0d0d0"/><path d="M997 46 L1007 46 M997 48 L1007 48" stroke="#2f2f2f" stroke-width="0.6"/><path d="M1022 40.5 L1036 40.5 M1022 53.5 L1036 53.5 M1022 43.5 L1025 43.5 M1022 47 L1025 47 M1022 50.5 L1025 50.5 M1033 43.5 L1036 43.5 M1033 47 L1036 47 M1033 50.5 L1036 50.5" stroke="#d0d0d0" stroke-width="1"/><rect x="1026.5" y="42.5" width="5" height="9" stroke="#d0d0d0" stroke-width="1" fill="none"/><path d="M995 66.5 L1009 66.5 M995 79.5 L1009 79.5 M995 70 L998 70 M995 73 L997 73 M995 76 L998 76 M1006 76 L1009 76" stroke="#d0d0d0" stroke-width="1"/><circle cx="1001" cy="74" r="4.5" fill="#c8c8c8"/><circle cx="1007" cy="69" r="4" fill="#1473e6"/><path d="M1022 67.5 L1036 67.5 M1022 77 L1036 77 M1022 80 L1036 80" stroke="#d0d0d0" stroke-width="1"/><rect x="1026" y="70" width="6" height="4.5" fill="#d0d0d0"/><path d="M1057 44 L1065 44 M1057 51.5 L1065 51.5 M1056 45.5 L1056 50.5 M1066.5 45.5 L1066.5 50.5" stroke="#a0a0a0" stroke-width="1" stroke-dasharray="1.2 1"/><rect x="1054" y="41" width="3.5" height="3.5" fill="#1a8cf0"/><rect x="1065" y="41" width="3.5" height="3.5" fill="#1a8cf0"/><rect x="1054" y="52" width="3.5" height="3.5" fill="#1a8cf0"/><rect x="1065" y="52" width="3.5" height="3.5" fill="#1a8cf0"/><path d="M1078 46.5 L1082.0 42.5 L1086 46.5" stroke="#c8c8c8" stroke-width="1" fill="none"/><path d="M1078 50.5 L1082.0 54.5 L1086 50.5" stroke="#c8c8c8" stroke-width="1" fill="none"/><path d="M1146 71.5 L1150.5 76.0 L1155 71.5" stroke="#c8c8c8" stroke-width="1" fill="none"/><path d="M1327 51 L1319 63 L1324 63 L1317 73 L1328.5 60 L1323.5 60 Z" fill="#b8b8b8"/><circle cx="1351" cy="50.5" r="4.8" fill="#c8c8c8"/><circle cx="1351" cy="50.5" r="1.8" fill="#535353"/><rect x="1355.10" y="49.00" width="3" height="3" fill="#c8c8c8" transform="rotate(0 1356.60 50.50)"/><rect x="1353.46" y="52.96" width="3" height="3" fill="#c8c8c8" transform="rotate(45 1354.96 54.46)"/><rect x="1349.50" y="54.60" width="3" height="3" fill="#c8c8c8" transform="rotate(90 1351.00 56.10)"/><rect x="1345.54" y="52.96" width="3" height="3" fill="#c8c8c8" transform="rotate(135 1347.04 54.46)"/><rect x="1343.90" y="49.00" width="3" height="3" fill="#c8c8c8" transform="rotate(180 1345.40 50.50)"/><rect x="1345.54" y="45.04" width="3" height="3" fill="#c8c8c8" transform="rotate(225 1347.04 46.54)"/><rect x="1349.50" y="43.40" width="3" height="3" fill="#c8c8c8" transform="rotate(270 1351.00 44.90)"/><rect x="1353.46" y="45.04" width="3" height="3" fill="#c8c8c8" transform="rotate(315 1354.96 46.54)"/><path d="M1345.5 69.5 L1357 69.5 M1345.5 73.5 L1357 73.5 M1345.5 77.5 L1357 77.5" stroke="#c8c8c8" stroke-width="1.3"/></svg>
<div style="position:absolute;left:1009px;top:5px;width:1px;height:20px;background:#606060;"></div>
<div style="position:absolute;left:1105px;top:5px;width:1px;height:20px;background:#606060;"></div>
<div style="position:absolute;left:1114px;top:4px;width:130px;height:20px;background:#4a4a4a;border:1px solid #6e6e6e;border-radius:4px;"></div>
<div style="position:absolute;left:1261px;top:-1px;width:100px;height:19px;border:1px solid #6a6a6a;border-radius:0 0 0 4px;"></div>
<div style="position:absolute;left:1288.5px;top:0px;width:1px;height:18px;background:#6a6a6a;"></div>
<div style="position:absolute;left:1316px;top:0px;width:1px;height:18px;background:#6a6a6a;"></div>
<svg style="position:absolute;left:0px;top:0px;pointer-events:none;" width="1360" height="729" viewBox="0 0 1360 729"><path d="M946 23 L946 20 M942.5 16 C938 12,939 5.5,946 5.5 C953 5.5,954 12,949.5 16 L949.5 19.5 L942.5 19.5 Z" stroke="#c0c0c0" stroke-width="1.3" fill="none"/><path d="M943.5 20.5 L948.5 20.5 L947.5 23 L944.5 23 Z" fill="#c0c0c0"/><path d="M978.5 12.5 L976 12.5 L976 22 L991 22 L991 12.5 L988.5 12.5" stroke="#c0c0c0" stroke-width="1.4" fill="none"/><path d="M983.5 17.5 L983.5 7" stroke="#c0c0c0" stroke-width="1.4"/><path d="M979.5 10.5 L983.5 6.5 L987.5 10.5" stroke="#c0c0c0" stroke-width="1.4" fill="none"/><path d="M1084 14.5 L1087.5 18 L1091 14.5" stroke="#d8d8d8" stroke-width="1.3" fill="none"/><circle cx="1122.5" cy="12.5" r="3.8" stroke="#c8c8c8" stroke-width="1.3" fill="none"/><path d="M1125 15.5 L1128.5 19" stroke="#c8c8c8" stroke-width="1.5"/><path d="M1129.5 12 L1131.5 14 L1133.5 12" stroke="#c8c8c8" stroke-width="1.1" fill="none"/><rect x="1269.5" y="11" width="11" height="2.5" fill="#c0c0c0"/><rect x="1298.5" y="6" width="7" height="5.5" stroke="#c0c0c0" stroke-width="1.4" fill="none"/><rect x="1295" y="9.5" width="7" height="5.5" stroke="#c0c0c0" stroke-width="1.4" fill="#535353"/><path d="M1334.5 7 L1344.5 16 M1344.5 7 L1334.5 16" stroke="#c0c0c0" stroke-width="1.6"/></svg>
<div id="t86" class="tx" style="position:absolute;left:1021px;top:8.00px;font-size:13px;line-height:13px;color:#e0e0e0;font-weight:normal;white-space:nowrap;font-family:'Liberation Sans', sans-serif;transform:scaleX(0.9113);transform-origin:left top;">Advanced</div>
<div id="t87" class="tx" style="position:absolute;left:1137px;top:8.34px;font-size:12px;line-height:12px;color:#8a8a8a;font-weight:normal;white-space:nowrap;font-family:'Liberation Sans', sans-serif;transform:scaleX(0.8597);transform-origin:left top;">Adobe Stock</div>
<div id="t88" class="tx" style="position:absolute;left:80.5px;top:100.69px;font-size:11px;line-height:11px;color:#c8c8c8;font-weight:normal;white-space:nowrap;font-family:'Liberation Sans', sans-serif;transform:scaleX(1.0000);transform-origin:left top;">)</div>
<div id="t89" class="tx" style="position:absolute;left:89.4px;top:99.42px;font-size:12.5px;line-height:12.5px;color:#f0f0f0;font-weight:normal;white-space:nowrap;font-family:'Liberation Sans', sans-serif;transform:scaleX(0.8469);transform-origin:left top;">53%</div>
<svg style="position:absolute;left:119px;top:101px;" width="8" height="8" viewBox="0 0 8 8"><path d="M1 1 L7 7 M7 1 L1 7" stroke="#f0f0f0" stroke-width="2"/></svg>
<div style="position:absolute;left:1197px;top:90px;width:3px;height:639px;background:#393939;"></div>
<div style="position:absolute;left:1200px;top:90px;width:160px;height:638px;background:#535353;"></div>
<div style="position:absolute;left:1200px;top:90px;width:160px;height:12px;background:#424242;border-bottom:1px solid #3a3a3a;"></div>
<div style="position:absolute;left:1200px;top:199px;width:160px;height:1.5px;background:#3c3c3c;"></div>
<div style="position:absolute;left:1200px;top:324px;width:160px;height:1.5px;background:#3c3c3c;"></div>
<div style="position:absolute;left:1200px;top:393px;width:160px;height:1.5px;background:#3c3c3c;"></div>
<div style="position:absolute;left:1200px;top:434px;width:160px;height:1.5px;background:#3c3c3c;"></div>
<div style="position:absolute;left:1200px;top:474px;width:160px;height:1.5px;background:#3c3c3c;"></div>
<div style="position:absolute;left:1204px;top:238.5px;width:156px;height:24px;background:#383838;border-radius:4px 0 0 4px;"></div>
<div id="t90" style="position:absolute;left:1237px;top:121.34px;font-size:12px;line-height:12px;color:#eeeeee;font-weight:bold;white-space:nowrap;font-family:'Liberation Sans', sans-serif;transform:scaleX(0.9191);transform-origin:left top;">Pages</div>
<div id="t91" style="position:absolute;left:1237px;top:149.34px;font-size:12px;line-height:12px;color:#eeeeee;font-weight:bold;white-space:nowrap;font-family:'Liberation Sans', sans-serif;transform:scaleX(0.8914);transform-origin:left top;">Layers</div>
<div id="t92" style="position:absolute;left:1237px;top:177.34px;font-size:12px;line-height:12px;color:#eeeeee;font-weight:bold;white-space:nowrap;font-family:'Liberation Sans', sans-serif;transform:scaleX(0.8295);transform-origin:left top;">Links</div>
<div id="t93" style="position:absolute;left:1237px;top:218.34px;font-size:12px;line-height:12px;color:#eeeeee;font-weight:bold;white-space:nowrap;font-family:'Liberation Sans', sans-serif;transform:scaleX(0.8833);transform-origin:left top;">Stroke</div>
<div id="t94" style="position:absolute;left:1237px;top:246.34px;font-size:12px;line-height:12px;color:#eeeeee;font-weight:bold;white-space:nowrap;font-family:'Liberation Sans', sans-serif;transform:scaleX(0.8580);transform-origin:left top;">Swatches</div>
<div id="t95" style="position:absolute;left:1237px;top:274.34px;font-size:12px;line-height:12px;color:#eeeeee;font-weight:bold;white-space:nowrap;font-family:'Liberation Sans', sans-serif;transform:scaleX(0.9120);transform-origin:left top;">Gradient</div>
<div id="t96" style="position:absolute;left:1237px;top:302.34px;font-size:12px;line-height:12px;color:#eeeeee;font-weight:bold;white-space:nowrap;font-family:'Liberation Sans', sans-serif;transform:scaleX(0.8478);transform-origin:left top;">CC Libraries</div>
<div id="t97" style="position:absolute;left:1237px;top:343.34px;font-size:12px;line-height:12px;color:#eeeeee;font-weight:bold;white-space:nowrap;font-family:'Liberation Sans', sans-serif;transform:scaleX(0.8747);transform-origin:left top;">Effects</div>
<div id="t98" style="position:absolute;left:1237px;top:371.34px;font-size:12px;line-height:12px;color:#eeeeee;font-weight:bold;white-space:nowrap;font-family:'Liberation Sans', sans-serif;transform:scaleX(0.8615);transform-origin:left top;">Object Styles</div>
<div id="t99" style="position:absolute;left:1237px;top:412.34px;font-size:12px;line-height:12px;color:#eeeeee;font-weight:bold;white-space:nowrap;font-family:'Liberation Sans', sans-serif;transform:scaleX(0.8873);transform-origin:left top;">Paragraph Styles</div>
<div id="t100" style="position:absolute;left:1237px;top:453.34px;font-size:12px;line-height:12px;color:#eeeeee;font-weight:bold;white-space:nowrap;font-family:'Liberation Sans', sans-serif;transform:scaleX(0.8763);transform-origin:left top;">Character Styles</div>
<div style="position:absolute;left:1212px;top:340px;font-family:'Liberation Sans',sans-serif;font-style:italic;font-size:17px;line-height:17px;color:#b0b0b0;letter-spacing:-0.5px;">fx</div>
<svg style="position:absolute;left:0px;top:0px;pointer-events:none;" width="1360" height="729" viewBox="0 0 1360 729"><path d="M1355 93.5 L1352.5 96 L1355 98.5 M1359 93.5 L1356.5 96 L1359 98.5" stroke="#c8c8c8" stroke-width="1.3" fill="none"/><rect x="1273" y="106" width="1" height="4" fill="#3a3a3a"/><rect x="1275" y="106" width="1" height="4" fill="#3a3a3a"/><rect x="1277" y="106" width="1" height="4" fill="#3a3a3a"/><rect x="1279" y="106" width="1" height="4" fill="#3a3a3a"/><rect x="1281" y="106" width="1" height="4" fill="#3a3a3a"/><rect x="1283" y="106" width="1" height="4" fill="#3a3a3a"/><rect x="1285" y="106" width="1" height="4" fill="#3a3a3a"/><rect x="1287" y="106" width="1" height="4" fill="#3a3a3a"/><rect x="1289" y="106" width="1" height="4" fill="#3a3a3a"/><rect x="1291" y="106" width="1" height="4" fill="#3a3a3a"/><rect x="1273" y="203" width="1" height="4" fill="#3a3a3a"/><rect x="1275" y="203" width="1" height="4" fill="#3a3a3a"/><rect x="1277" y="203" width="1" height="4" fill="#3a3a3a"/><rect x="1279" y="203" width="1" height="4" fill="#3a3a3a"/><rect x="1281" y="203" width="1" height="4" fill="#3a3a3a"/><rect x="1283" y="203" width="1" height="4" fill="#3a3a3a"/><rect x="1285" y="203" width="1" height="4" fill="#3a3a3a"/><rect x="1287" y="203" width="1" height="4" fill="#3a3a3a"/><rect x="1289" y="203" width="1" height="4" fill="#3a3a3a"/><rect x="1291" y="203" width="1" height="4" fill="#3a3a3a"/><rect x="1273" y="328" width="1" height="4" fill="#3a3a3a"/><rect x="1275" y="328" width="1" height="4" fill="#3a3a3a"/><rect x="1277" y="328" width="1" height="4" fill="#3a3a3a"/><rect x="1279" y="328" width="1" height="4" fill="#3a3a3a"/><rect x="1281" y="328" width="1" height="4" fill="#3a3a3a"/><rect x="1283" y="328" width="1" height="4" fill="#3a3a3a"/><rect x="1285" y="328" width="1" height="4" fill="#3a3a3a"/><rect x="1287" y="328" width="1" height="4" fill="#3a3a3a"/><rect x="1289" y="328" width="1" height="4" fill="#3a3a3a"/><rect x="1291" y="328" width="1" height="4" fill="#3a3a3a"/><rect x="1273" y="396" width="1" height="4" fill="#3a3a3a"/><rect x="1275" y="396" width="1" height="4" fill="#3a3a3a"/><rect x="1277" y="396" width="1" height="4" fill="#3a3a3a"/><rect x="1279" y="396" width="1" height="4" fill="#3a3a3a"/><rect x="1281" y="396" width="1" height="4" fill="#3a3a3a"/><rect x="1283" y="396" width="1" height="4" fill="#3a3a3a"/><rect x="1285" y="396" width="1" height="4" fill="#3a3a3a"/><rect x="1287" y="396" width="1" height="4" fill="#3a3a3a"/><rect x="1289" y="396" width="1" height="4" fill="#3a3a3a"/><rect x="1291" y="396" width="1" height="4" fill="#3a3a3a"/><rect x="1273" y="437" width="1" height="4" fill="#3a3a3a"/><rect x="1275" y="437" width="1" height="4" fill="#3a3a3a"/><rect x="1277" y="437" width="1" height="4" fill="#3a3a3a"/><rect x="1279" y="437" width="1" height="4" fill="#3a3a3a"/><rect x="1281" y="437" width="1" height="4" fill="#3a3a3a"/><rect x="1283" y="437" width="1" height="4" fill="#3a3a3a"/><rect x="1285" y="437" width="1" height="4" fill="#3a3a3a"/><rect x="1287" y="437" width="1" height="4" fill="#3a3a3a"/><rect x="1289" y="437" width="1" height="4" fill="#3a3a3a"/><rect x="1291" y="437" width="1" height="4" fill="#3a3a3a"/><path d="M1210 122 L1214 118 L1218.5 118 L1218.5 134 L1210 134 Z M1228 122 L1224 118 L1219.5 118 L1219.5 134 L1228 134 Z" fill="#c8c8c8"/><path d="M1219 116 L1219 136" stroke="#c8c8c8" stroke-width="1"/><path d="M1219 146 L1228 151 L1219 156 L1210 151 Z" fill="#c8c8c8"/><path d="M1210 155.5 L1219 160.5 L1228 155.5 L1228 157 L1219 162 L1210 157 Z" fill="#c8c8c8"/><rect x="1210.5" y="179" width="10" height="7" rx="3.5" stroke="#c8c8c8" stroke-width="1.6" fill="none"/><rect x="1217.5" y="179" width="10" height="7" rx="3.5" stroke="#c8c8c8" stroke-width="1.6" fill="none"/><path d="M1210 219 L1228 219 M1210 224 L1228 224 M1210 229 L1228 229" stroke="#c8c8c8" stroke-width="2"/><rect x="1211.5" y="246.5" width="16" height="11" stroke="#c8c8c8" stroke-width="1" fill="#c8c8c8"/><rect x="1212.5" y="247.5" width="4" height="4" fill="#6e6e6e"/><rect x="1217.5" y="247.5" width="4" height="4" fill="#c8c8c8"/><rect x="1222.5" y="247.5" width="4" height="4" fill="#6e6e6e"/><rect x="1212.5" y="252.5" width="4" height="4" fill="#6e6e6e"/><rect x="1217.5" y="252.5" width="4" height="4" fill="#8a8a8a"/><rect x="1222.5" y="252.5" width="4" height="4" fill="#a8a8a8"/><defs><linearGradient id="gr2" x1="0" x2="1"><stop offset="0" stop-color="#cfcfcf"/><stop offset="1" stop-color="#5a5a5a"/></linearGradient></defs><rect x="1210.5" y="273.5" width="17" height="12" stroke="#c8c8c8" stroke-width="1" fill="url(#gr2)"/><rect x="1211.5" y="302.5" width="13" height="13" stroke="#c8c8c8" stroke-width="1.1" fill="none"/><rect x="1213.5" y="300.5" width="13" height="13" stroke="#c8c8c8" stroke-width="1.1" fill="#535353"/><path d="M1220 301 L1220 307.5 L1222.2 305.8 L1224.5 307.5 L1224.5 301 Z" fill="#c8c8c8"/><path d="M1215.5 373.5 A2.5 2.5 0 0 0 1218 371 L1225 371 A2.5 2.5 0 0 0 1227.5 373.5 L1227.5 380.5 A2.5 2.5 0 0 0 1225 383 L1220 383" stroke="#c8c8c8" stroke-width="1.2" fill="none"/><rect x="1210.5" y="377.5" width="6" height="6" stroke="#c8c8c8" stroke-width="1" fill="#535353"/><rect x="1213.5" y="380.5" width="6" height="6" stroke="#c8c8c8" stroke-width="1" fill="#535353"/><rect x="1210.5" y="418.5" width="6" height="6" stroke="#c8c8c8" stroke-width="1" fill="#535353"/><rect x="1213" y="421" width="6" height="6" stroke="#c8c8c8" stroke-width="1" fill="#535353"/><path d="M1222 410 L1228 410 M1224.5 410 L1224.5 422 M1227 410 L1227 422" stroke="#c8c8c8" stroke-width="1.3"/><path d="M1224 410 C1219 410,1219 416,1224 416 Z" fill="#c8c8c8"/><rect x="1210.5" y="459.5" width="6" height="6" stroke="#c8c8c8" stroke-width="1" fill="#535353"/><rect x="1213" y="462" width="6" height="6" stroke="#c8c8c8" stroke-width="1" fill="#535353"/><path d="M1218.5 461 L1223.5 449.5 L1228.5 461 M1220.2 457 L1226.8 457" stroke="#c8c8c8" stroke-width="1.5" fill="none"/></svg>
<div style="position:absolute;left:1182px;top:120px;width:15px;height:591px;background:#4a4a4a;"></div>
<div style="position:absolute;left:1183px;top:200px;width:14px;height:435px;background:#6a6a6a;border-radius:7px;"></div>
<svg style="position:absolute;left:1182px;top:120px;" width="15" height="591" viewBox="0 0 15 591"><path d="M3.5 9 L7.5 5.5 L11.5 9" stroke="#8a8a8a" stroke-width="1.2" fill="none"/><path d="M3.5 582 L7.5 586 L11.5 582" stroke="#b0b0b0" stroke-width="1.2" fill="none"/></svg>
<div style="position:absolute;left:967px;top:133px;width:167px;height:55px;background:#535353;border:1px solid #3e3e3e;border-radius:4px 4px 0 0;box-shadow:0 1px 3px rgba(0,0,0,0.35);"></div>
<div style="position:absolute;left:967px;top:133px;width:167px;height:14px;background:#434343;border-radius:4px 4px 0 0;border-bottom:1px solid #3a3a3a;"></div>
<svg style="position:absolute;left:0px;top:0px;pointer-events:none;" width="1360" height="729" viewBox="0 0 1360 729"><path d="M1103 137.5 L1105.5 140 L1103 142.5 M1107 137.5 L1109.5 140 L1107 142.5" stroke="#c8c8c8" stroke-width="1.3" fill="none"/><path d="M1122.5 137 L1128 143 M1128 137 L1122.5 143" stroke="#9a9a9a" stroke-width="2"/><rect x="1041" y="150" width="1" height="4" fill="#3a3a3a"/><rect x="1043" y="150" width="1" height="4" fill="#3a3a3a"/><rect x="1045" y="150" width="1" height="4" fill="#3a3a3a"/><rect x="1047" y="150" width="1" height="4" fill="#3a3a3a"/><rect x="1049" y="150" width="1" height="4" fill="#3a3a3a"/><rect x="1051" y="150" width="1" height="4" fill="#3a3a3a"/><rect x="1053" y="150" width="1" height="4" fill="#3a3a3a"/><rect x="1055" y="150" width="1" height="4" fill="#3a3a3a"/><rect x="1057" y="150" width="1" height="4" fill="#3a3a3a"/><rect x="1059" y="150" width="1" height="4" fill="#3a3a3a"/><path d="M980 162 L987 162 L990 165 L990 173 L985 178 L980 178 Z" fill="#c8c8c8"/><path d="M981.5 166 L983 167.5 L985.5 164.5 M981.5 171 L983 172.5 L985.5 169.5" stroke="#535353" stroke-width="0.9" fill="none"/><path d="M986 180 L987 176 L994 169 L996.5 171.5 L989.5 178.5 Z" fill="#c8c8c8"/><path d="M988 172 L993 177" stroke="#535353" stroke-width="0.8"/></svg>
<div id="t101" style="position:absolute;left:1005px;top:164.92px;font-size:12.5px;line-height:12.5px;color:#eeeeee;font-weight:bold;white-space:nowrap;font-family:'Liberation Sans', sans-serif;transform:scaleX(0.8875);transform-origin:left top;">Preflight</div>
<div style="position:absolute;left:957px;top:197px;width:241px;height:172px;background:#535353;border:1px solid #3e3e3e;box-shadow:0 1px 3px rgba(0,0,0,0.35);"></div>
<div style="position:absolute;left:957px;top:197px;width:241px;height:31px;background:#474747;border-bottom:1px solid #3c3c3c;"></div>
<div style="position:absolute;left:957px;top:197px;width:241px;height:4px;background:#3e3e3e;"></div>
<div style="position:absolute;left:991px;top:201px;width:77px;height:27px;background:#535353;"></div>
<div style="position:absolute;left:990px;top:201px;width:1px;height:27px;background:#3c3c3c;"></div>
<div style="position:absolute;left:1068px;top:201px;width:1px;height:27px;background:#3c3c3c;"></div>
<div style="position:absolute;left:1100.5px;top:201px;width:1px;height:27px;background:#3c3c3c;"></div>
<div style="position:absolute;left:1133.5px;top:201px;width:1px;height:27px;background:#3c3c3c;"></div>
<div id="t102" style="position:absolute;left:970px;top:208.92px;font-size:12.5px;line-height:12.5px;color:#b8b8b8;font-weight:bold;white-space:nowrap;font-family:'Liberation Sans', sans-serif;transform:scaleX(0.8400);transform-origin:left top;">Stro</div>
<div id="t103" style="position:absolute;left:1008px;top:208.92px;font-size:12.5px;line-height:12.5px;color:#f2f2f2;font-weight:bold;white-space:nowrap;font-family:'Liberation Sans', sans-serif;transform:scaleX(0.8323);transform-origin:left top;">Swatches</div>
<div id="t104" style="position:absolute;left:1080px;top:208.92px;font-size:12.5px;line-height:12.5px;color:#b8b8b8;font-weight:bold;white-space:nowrap;font-family:'Liberation Sans', sans-serif;transform:scaleX(0.7024);transform-origin:left top;">Grad</div>
<div id="t105" style="position:absolute;left:1112px;top:208.92px;font-size:12.5px;line-height:12.5px;color:#b8b8b8;font-weight:bold;white-space:nowrap;font-family:'Liberation Sans', sans-serif;transform:scaleX(0.7199);transform-origin:left top;">CC L</div>
<svg style="position:absolute;left:0px;top:0px;pointer-events:none;" width="1360" height="729" viewBox="0 0 1360 729"><path d="M997.5 212 L999.5 209.5 L1001.5 212 M997.5 216.5 L999.5 219 L1001.5 216.5" stroke="#c8c8c8" stroke-width="1.1" fill="none"/><path d="M1158 211.5 L1161 214.5 L1158 217.5 M1162.5 211.5 L1165.5 214.5 L1162.5 217.5" stroke="#e0e0e0" stroke-width="1.4" fill="none"/><path d="M1174.5 208 L1174.5 221" stroke="#9a9a9a" stroke-width="1"/><path d="M1182 210.5 L1192 210.5 M1182 213 L1192 213 M1182 215.5 L1192 215.5 M1182 218 L1192 218" stroke="#c8c8c8" stroke-width="1"/><rect x="975.5" y="246.5" width="17" height="17" fill="#ffffff"/><rect x="979" y="250" width="10" height="10" fill="#535353"/><path d="M976 263 L992 247" stroke="#ff1a1a" stroke-width="1.8"/><rect x="964.5" y="235.5" width="19.5" height="19.5" fill="#263f8e"/><path d="M988 236.5 L991.5 236.5 L991.5 240.5" stroke="#c8c8c8" stroke-width="1" fill="none"/><path d="M986.5 236.5 L988.5 234.8 L988.5 238.2 Z M991.5 242 L989.8 240 L993.2 240 Z" fill="#c8c8c8"/></svg>
<div style="position:absolute;left:1003px;top:239px;width:19px;height:19px;background:#303030;border-radius:3px;"></div>
<svg style="position:absolute;left:0px;top:0px;pointer-events:none;" width="1360" height="729" viewBox="0 0 1360 729"><rect x="1008.5" y="244.5" width="8" height="8" stroke="#c8c8c8" stroke-width="1.1" fill="none"/><path d="M1029 243 L1037.5 243 L1037.5 245.5 L1036.6 245.5 L1036.6 244.2 L1034.2 244.2 L1034.2 252 L1035.3 252 L1035.3 253.3 L1031.2 253.3 L1031.2 252 L1032.3 252 L1032.3 244.2 L1029.9 244.2 L1029.9 245.5 L1029 245.5 Z" fill="#c8c8c8"/></svg>
<div id="t106" class="tx" style="position:absolute;left:1080px;top:243.27px;font-size:11.5px;line-height:11.5px;color:#e0e0e0;font-weight:normal;white-space:nowrap;font-family:'Liberation Sans', sans-serif;transform:scaleX(0.9110);transform-origin:left top;">Tint:</div>
<div style="position:absolute;left:1106px;top:238px;width:53px;height:21px;background:#434343;border:1px solid #6a6a6a;border-radius:3px;"></div>
<div style="position:absolute;left:1140.5px;top:239px;width:1px;height:19px;background:#6a6a6a;"></div>
<svg style="position:absolute;left:1145px;top:244px;" width="8" height="10" viewBox="0 0 8 10"><path d="M2 1 L6 5 L2 9" stroke="#d0d0d0" stroke-width="1" fill="none"/></svg>
<div id="t107" class="tx" style="position:absolute;left:1110px;top:243.27px;font-size:11.5px;line-height:11.5px;color:#f0f0f0;font-weight:normal;white-space:nowrap;font-family:'Liberation Sans', sans-serif;transform:scaleX(0.8599);transform-origin:left top;">100</div>
<div id="t108" class="tx" style="position:absolute;left:1161px;top:243.77px;font-size:11.5px;line-height:11.5px;color:#f0f0f0;font-weight:normal;white-space:nowrap;font-family:'Liberation Sans', sans-serif;transform:scaleX(0.8794);transform-origin:left top;">%</div>
<div style="position:absolute;left:958px;top:268px;width:239px;height:1px;background:#3e3e3e;"></div>
<div style="position:absolute;left:958px;top:289px;width:227px;height:1px;background:#5d5d5d;"></div>
<div style="position:absolute;left:977px;top:272px;width:13px;height:14px;background:#d8242c;border:1px solid #2e2e2e;"></div>
<div id="t109" class="tx" style="position:absolute;left:997px;top:274.11px;font-size:10.5px;line-height:10.5px;color:#ececec;font-weight:normal;white-space:nowrap;font-family:'Liberation Sans', sans-serif;transform:scaleX(0.9355);transform-origin:left top;">C=15 M=100 Y=100 K=0</div>
<div style="position:absolute;left:1143px;top:273px;width:11px;height:11px;background:#d0d0d0;"></div>
<div style="position:absolute;left:958px;top:311px;width:227px;height:1px;background:#5d5d5d;"></div>
<div style="position:absolute;left:977px;top:294px;width:13px;height:14px;background:#3fae4c;border:1px solid #2e2e2e;"></div>
<div id="t110" class="tx" style="position:absolute;left:997px;top:296.11px;font-size:10.5px;line-height:10.5px;color:#ececec;font-weight:normal;white-space:nowrap;font-family:'Liberation Sans', sans-serif;transform:scaleX(0.9443);transform-origin:left top;">C=75 M=5 Y=100 K=0</div>
<div style="position:absolute;left:1143px;top:295px;width:11px;height:11px;background:#d0d0d0;"></div>
<div style="position:absolute;left:958px;top:312px;width:227px;height:22px;background:#4e6684;"></div>
<div style="position:absolute;left:977px;top:316px;width:13px;height:14px;background:#263f8e;border:1px solid #2e2e2e;"></div>
<div id="t111" style="position:absolute;left:997px;top:318.11px;font-size:10.5px;line-height:10.5px;color:#f4f4f4;font-weight:bold;white-space:nowrap;font-family:'Liberation Sans', sans-serif;transform:scaleX(1.0764);transform-origin:left top;">C=100 M=90 Y=10 K=0</div>
<div style="position:absolute;left:1143px;top:317px;width:11px;height:11px;background:#d0d0d0;"></div>
<div style="position:absolute;left:1185px;top:268px;width:12px;height:66px;background:#4a4a4a;"></div>
<div style="position:absolute;left:1186px;top:297px;width:11px;height:25px;background:#6a6a6a;border-radius:5.5px;"></div>
<div style="position:absolute;left:958px;top:334px;width:239px;height:1px;background:#3e3e3e;"></div>
<svg style="position:absolute;left:0px;top:0px;pointer-events:none;" width="1360" height="729" viewBox="0 0 1360 729"><pattern id="ck0" width="2" height="2" patternUnits="userSpaceOnUse" x="0" y="0"><rect width="1" height="1" fill="#8a8a8a"/><rect x="1" y="1" width="1" height="1" fill="#8a8a8a"/></pattern><rect x="1144" y="274" width="9" height="9" fill="url(#ck0)"/><rect x="1159" y="273" width="11" height="11" fill="#ffffff"/><path d="M1160 274 L1169 274 L1164.5 278.5 Z" fill="#ff00ff"/><path d="M1160 274 L1164.5 278.5 L1160 283 Z" fill="#00c8ff"/><path d="M1169 274 L1164.5 278.5 L1169 283 Z" fill="#ffff00"/><path d="M1160 283 L1164.5 278.5 L1169 283 Z" fill="#000000"/><pattern id="ck1" width="2" height="2" patternUnits="userSpaceOnUse" x="0" y="0"><rect width="1" height="1" fill="#8a8a8a"/><rect x="1" y="1" width="1" height="1" fill="#8a8a8a"/></pattern><rect x="1144" y="296" width="9" height="9" fill="url(#ck1)"/><rect x="1159" y="295" width="11" height="11" fill="#ffffff"/><path d="M1160 296 L1169 296 L1164.5 300.5 Z" fill="#ff00ff"/><path d="M1160 296 L1164.5 300.5 L1160 305 Z" fill="#00c8ff"/><path d="M1169 296 L1164.5 300.5 L1169 305 Z" fill="#ffff00"/><path d="M1160 305 L1164.5 300.5 L1169 305 Z" fill="#000000"/><pattern id="ck2" width="2" height="2" patternUnits="userSpaceOnUse" x="0" y="0"><rect width="1" height="1" fill="#8a8a8a"/><rect x="1" y="1" width="1" height="1" fill="#8a8a8a"/></pattern><rect x="1144" y="318" width="9" height="9" fill="url(#ck2)"/><rect x="1159" y="317" width="11" height="11" fill="#ffffff"/><path d="M1160 318 L1169 318 L1164.5 322.5 Z" fill="#ff00ff"/><path d="M1160 318 L1164.5 322.5 L1160 327 Z" fill="#00c8ff"/><path d="M1169 318 L1164.5 322.5 L1169 327 Z" fill="#ffff00"/><path d="M1160 327 L1164.5 322.5 L1169 327 Z" fill="#000000"/><path d="M1188 275 L1191.5 271.5 L1195 275" stroke="#8a8a8a" stroke-width="1" fill="none"/><path d="M1188 327 L1191.5 330.5 L1195 327" stroke="#8a8a8a" stroke-width="1" fill="none"/><rect x="968.5" y="343.5" width="10" height="10" stroke="#c8c8c8" stroke-width="1" fill="none"/><rect x="966.5" y="341.5" width="10" height="10" stroke="#c8c8c8" stroke-width="1" fill="#535353"/><path d="M965 350 L972 350" stroke="#c8c8c8" stroke-width="1.4"/><path d="M973.5 350 L970 347 L970 353 Z" fill="#c8c8c8"/><path d="M974 342 L974 346 L975.5 345 L977 346 L977 342 Z" fill="#c8c8c8"/><rect x="1078" y="343" width="3" height="3" fill="#c8c8c8"/><rect x="1082" y="343" width="3" height="3" fill="#c8c8c8"/><rect x="1086" y="343" width="3" height="3" fill="#c8c8c8"/><rect x="1078" y="347" width="3" height="3" fill="#c8c8c8"/><rect x="1082" y="347" width="3" height="3" fill="#c8c8c8"/><rect x="1086" y="347" width="3" height="3" fill="#c8c8c8"/><rect x="1078" y="351" width="3" height="3" fill="#c8c8c8"/><rect x="1082" y="351" width="3" height="3" fill="#c8c8c8"/><rect x="1086" y="351" width="3" height="3" fill="#c8c8c8"/><path d="M1090 352.5 L1093 352.5 L1091.5 354.5 Z" fill="#c8c8c8"/><path d="M1106 343 L1111 343 L1112 344.5 L1119 344.5 L1119 353 L1106 353 Z" fill="#c8c8c8"/><rect x="1135.5" y="342.5" width="11" height="11" stroke="#c8c8c8" stroke-width="1" fill="none"/><path d="M1141 345 L1141 351 M1138 348 L1144 348" stroke="#c8c8c8" stroke-width="1.1"/><path d="M1162.5 344.5 L1174 344.5 M1166 344.5 L1166 342.5 L1170.5 342.5 L1170.5 344.5" stroke="#c8c8c8" stroke-width="1.1" fill="none"/><path d="M1163.5 345.5 L1164.5 354 L1172 354 L1173 345.5" stroke="#c8c8c8" stroke-width="1.1" fill="none"/><path d="M1166.5 347 L1166.5 352 M1168.2 347 L1168.2 352 M1170 347 L1170 352" stroke="#c8c8c8" stroke-width="0.9"/></svg>
<div style="position:absolute;left:958px;top:360px;width:239px;height:8px;background:#4a4a4a;border-top:1px solid #3a3a3a;"></div>
<svg style="position:absolute;left:0px;top:0px;pointer-events:none;" width="1360" height="729" viewBox="0 0 1360 729"><rect x="1068" y="362" width="1" height="4" fill="#3a3a3a"/><rect x="1070" y="362" width="1" height="4" fill="#3a3a3a"/><rect x="1072" y="362" width="1" height="4" fill="#3a3a3a"/><rect x="1074" y="362" width="1" height="4" fill="#3a3a3a"/><rect x="1076" y="362" width="1" height="4" fill="#3a3a3a"/><rect x="1078" y="362" width="1" height="4" fill="#3a3a3a"/><rect x="1080" y="362" width="1" height="4" fill="#3a3a3a"/><rect x="1082" y="362" width="1" height="4" fill="#3a3a3a"/><rect x="1084" y="362" width="1" height="4" fill="#3a3a3a"/><rect x="1086" y="362" width="1" height="4" fill="#3a3a3a"/></svg>
<div id="t112" class="tx" style="position:absolute;left:15.4px;top:713.77px;font-size:11.5px;line-height:11.5px;color:#e6e6e6;font-weight:normal;white-space:nowrap;font-family:'Liberation Sans', sans-serif;transform:scaleX(0.8099);transform-origin:left top;">53.25%</div>
<div style="position:absolute;left:117px;top:711.5px;width:91px;height:15px;background:#424242;border:1px solid #6a6a6a;border-radius:3px;"></div>
<div style="position:absolute;left:189px;top:712px;width:1px;height:14px;background:#6a6a6a;"></div>
<div id="t113" class="tx" style="position:absolute;left:121.5px;top:714.11px;font-size:10.5px;line-height:10.5px;color:#f0f0f0;font-weight:normal;white-space:nowrap;font-family:'Liberation Sans', sans-serif;transform:scaleX(1.0000);transform-origin:left top;">1</div>
<div id="t114" class="tx" style="position:absolute;left:297px;top:713.77px;font-size:11.5px;line-height:11.5px;color:#e0e0e0;font-weight:normal;white-space:nowrap;font-family:'Liberation Sans', sans-serif;transform:scaleX(0.9059);transform-origin:left top;">[Basic] (working)</div>
<div id="t115" class="tx" style="position:absolute;left:439px;top:713.77px;font-size:11.5px;line-height:11.5px;color:#e6e6e6;font-weight:normal;white-space:nowrap;font-family:'Liberation Sans', sans-serif;transform:scaleX(0.8553);transform-origin:left top;">No errors</div>
<div style="position:absolute;left:515px;top:711px;width:645px;height:17px;background:#474747;"></div>
<div style="position:absolute;left:709px;top:712px;width:410px;height:15px;background:#6a6a6a;border-radius:7.5px;"></div>
<div style="position:absolute;left:1160px;top:711px;width:37px;height:17px;background:#4f4f4f;"></div>
<svg style="position:absolute;left:0px;top:0px;pointer-events:none;" width="1360" height="729" viewBox="0 0 1360 729"><path d="M58 717 L61.5 720.5 L65 717" stroke="#c8c8c8" stroke-width="1.2" fill="none"/><rect x="77.5" y="714.5" width="1.8" height="9" fill="#6e6e6e"/><path d="M86 714.5 L80 719 L86 723.5 Z" fill="#6e6e6e"/><path d="M106 714.5 L100.5 719 L106 723.5 Z" fill="#6e6e6e"/><path d="M195 717 L198.5 720.5 L202 717" stroke="#c8c8c8" stroke-width="1.2" fill="none"/><path d="M222.5 714.5 L228 719 L222.5 723.5 Z" fill="#6e6e6e"/><path d="M240 714.5 L246 719 L240 723.5 Z" fill="#6e6e6e"/><rect x="246.5" y="714.5" width="1.8" height="9" fill="#6e6e6e"/><circle cx="271.5" cy="719.5" r="5.8" fill="#b4b4b4"/><path d="M272 713.7 L272 719.5 L277.3 719.5" stroke="#4f4f4f" stroke-width="1.6" fill="none"/><path d="M266 723.5 L268 726 L270 723.5" fill="#4f4f4f"/><path d="M278 724 L281 724 L279.5 726 Z" fill="#b4b4b4"/><path d="M400.5 717 L404 720.5 L407.5 717" stroke="#c8c8c8" stroke-width="1.2" fill="none"/><circle cx="428" cy="719.5" r="5.3" fill="#3eab48"/><path d="M502 717 L505.5 720.5 L509 717" stroke="#c8c8c8" stroke-width="1.2" fill="none"/><path d="M525.5 715.5 L522.5 719 L525.5 722.5" stroke="#8a8a8a" stroke-width="1" fill="none"/><path d="M1150 715.5 L1153 719 L1150 722.5" stroke="#a0a0a0" stroke-width="1" fill="none"/><rect x="1164.5" y="714.5" width="15" height="10" stroke="#e0e0e0" stroke-width="1.3" fill="none"/><path d="M1172 714.5 L1172 724.5" stroke="#e0e0e0" stroke-width="1.3"/><rect x="1194" y="715" width="1" height="1" fill="#8a8a8a"/><rect x="1192" y="717" width="1" height="1" fill="#8a8a8a"/><rect x="1194" y="717" width="1" height="1" fill="#8a8a8a"/><rect x="1190" y="719" width="1" height="1" fill="#8a8a8a"/><rect x="1192" y="719" width="1" height="1" fill="#8a8a8a"/><rect x="1194" y="719" width="1" height="1" fill="#8a8a8a"/><rect x="1188" y="721" width="1" height="1" fill="#8a8a8a"/><rect x="1190" y="721" width="1" height="1" fill="#8a8a8a"/><rect x="1192" y="721" width="1" height="1" fill="#8a8a8a"/><rect x="1194" y="721" width="1" height="1" fill="#8a8a8a"/><rect x="1186" y="723" width="1" height="1" fill="#8a8a8a"/><rect x="1188" y="723" width="1" height="1" fill="#8a8a8a"/><rect x="1190" y="723" width="1" height="1" fill="#8a8a8a"/><rect x="1192" y="723" width="1" height="1" fill="#8a8a8a"/><rect x="1194" y="723" width="1" height="1" fill="#8a8a8a"/></svg>
</body></html>
